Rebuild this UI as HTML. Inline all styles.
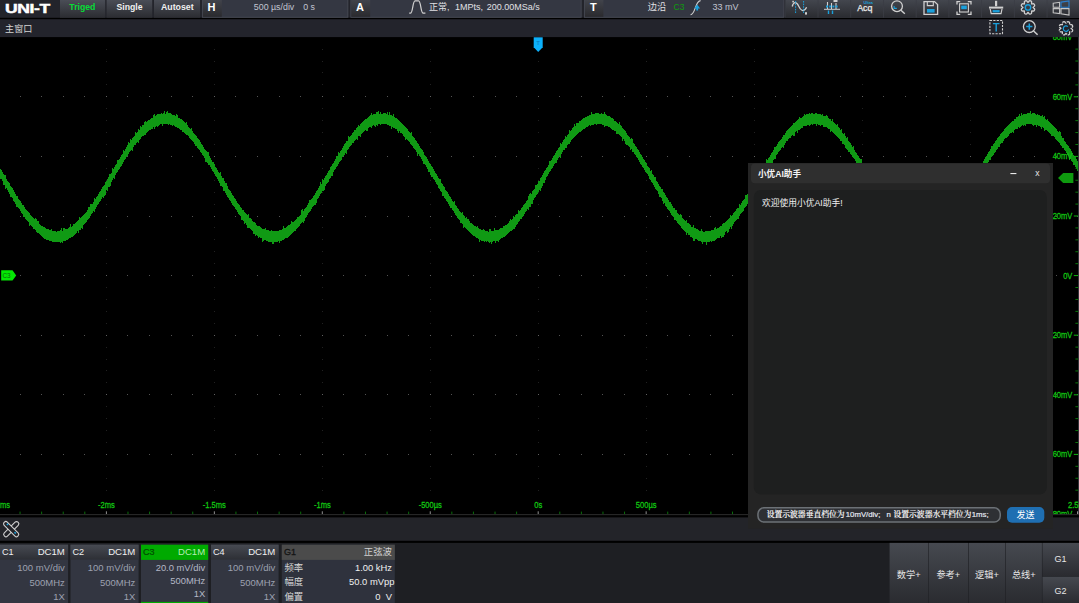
<!DOCTYPE html>
<html lang="zh-CN">
<head>
<meta charset="utf-8">
<title>UNI-T Oscilloscope</title>
<style>
html,body{margin:0;padding:0;background:#000;}
body{width:1079px;height:603px;position:relative;overflow:hidden;font-family:"Liberation Sans","Noto Sans CJK SC",sans-serif;}
#app{position:absolute;left:0;top:0;width:1079px;height:603px;overflow:hidden;background:#000;}
#app div{position:absolute;}
.t{margin:0;padding:0;}
.l{color:#d4dae4;}
svg{overflow:visible;}
</style>
</head>
<body>
<div id="app">
<svg class="scope" width="1079" height="603" viewBox="0 0 1079 603" style="position:absolute;left:0;top:0"><defs><clipPath id="cl"><rect x="0" y="37.1" width="1079" height="477.2"/></clipPath></defs><rect x="0" y="37.1" width="1079" height="477.2" fill="#000"/><g clip-path="url(#cl)"><g fill="#8a8a8a"><rect x="106" y="49" width="1" height="1" opacity="0.24"/><rect x="106" y="61" width="1" height="1" opacity="0.24"/><rect x="106" y="72" width="1" height="1" opacity="0.24"/><rect x="106" y="84" width="1" height="1" opacity="0.24"/><rect x="106" y="96" width="1" height="1" opacity="0.24"/><rect x="106" y="108" width="1" height="1" opacity="0.24"/><rect x="106" y="120" width="1" height="1" opacity="0.24"/><rect x="106" y="132" width="1" height="1" opacity="0.24"/><rect x="106" y="144" width="1" height="1" opacity="0.24"/><rect x="106" y="156" width="1" height="1" opacity="0.24"/><rect x="106" y="168" width="1" height="1" opacity="0.24"/><rect x="106" y="180" width="1" height="1" opacity="0.24"/><rect x="106" y="192" width="1" height="1" opacity="0.24"/><rect x="106" y="204" width="1" height="1" opacity="0.24"/><rect x="106" y="216" width="1" height="1" opacity="0.24"/><rect x="106" y="227" width="1" height="1" opacity="0.24"/><rect x="106" y="239" width="1" height="1" opacity="0.24"/><rect x="106" y="251" width="1" height="1" opacity="0.24"/><rect x="106" y="263" width="1" height="1" opacity="0.24"/><rect x="106" y="275" width="1" height="1" opacity="0.24"/><rect x="106" y="287" width="1" height="1" opacity="0.24"/><rect x="106" y="299" width="1" height="1" opacity="0.24"/><rect x="106" y="311" width="1" height="1" opacity="0.24"/><rect x="106" y="323" width="1" height="1" opacity="0.24"/><rect x="106" y="335" width="1" height="1" opacity="0.24"/><rect x="106" y="347" width="1" height="1" opacity="0.24"/><rect x="106" y="359" width="1" height="1" opacity="0.24"/><rect x="106" y="370" width="1" height="1" opacity="0.24"/><rect x="106" y="382" width="1" height="1" opacity="0.24"/><rect x="106" y="394" width="1" height="1" opacity="0.24"/><rect x="106" y="406" width="1" height="1" opacity="0.24"/><rect x="106" y="418" width="1" height="1" opacity="0.24"/><rect x="106" y="430" width="1" height="1" opacity="0.24"/><rect x="106" y="442" width="1" height="1" opacity="0.24"/><rect x="106" y="454" width="1" height="1" opacity="0.24"/><rect x="106" y="466" width="1" height="1" opacity="0.24"/><rect x="106" y="478" width="1" height="1" opacity="0.24"/><rect x="106" y="490" width="1" height="1" opacity="0.24"/><rect x="106" y="502" width="1" height="1" opacity="0.24"/><rect x="214" y="49" width="1" height="1" opacity="0.24"/><rect x="214" y="61" width="1" height="1" opacity="0.24"/><rect x="214" y="72" width="1" height="1" opacity="0.24"/><rect x="214" y="84" width="1" height="1" opacity="0.24"/><rect x="214" y="96" width="1" height="1" opacity="0.24"/><rect x="214" y="108" width="1" height="1" opacity="0.24"/><rect x="214" y="120" width="1" height="1" opacity="0.24"/><rect x="214" y="132" width="1" height="1" opacity="0.24"/><rect x="214" y="144" width="1" height="1" opacity="0.24"/><rect x="214" y="156" width="1" height="1" opacity="0.24"/><rect x="214" y="168" width="1" height="1" opacity="0.24"/><rect x="214" y="180" width="1" height="1" opacity="0.24"/><rect x="214" y="192" width="1" height="1" opacity="0.24"/><rect x="214" y="204" width="1" height="1" opacity="0.24"/><rect x="214" y="216" width="1" height="1" opacity="0.24"/><rect x="214" y="227" width="1" height="1" opacity="0.24"/><rect x="214" y="239" width="1" height="1" opacity="0.24"/><rect x="214" y="251" width="1" height="1" opacity="0.24"/><rect x="214" y="263" width="1" height="1" opacity="0.24"/><rect x="214" y="275" width="1" height="1" opacity="0.24"/><rect x="214" y="287" width="1" height="1" opacity="0.24"/><rect x="214" y="299" width="1" height="1" opacity="0.24"/><rect x="214" y="311" width="1" height="1" opacity="0.24"/><rect x="214" y="323" width="1" height="1" opacity="0.24"/><rect x="214" y="335" width="1" height="1" opacity="0.24"/><rect x="214" y="347" width="1" height="1" opacity="0.24"/><rect x="214" y="359" width="1" height="1" opacity="0.24"/><rect x="214" y="370" width="1" height="1" opacity="0.24"/><rect x="214" y="382" width="1" height="1" opacity="0.24"/><rect x="214" y="394" width="1" height="1" opacity="0.24"/><rect x="214" y="406" width="1" height="1" opacity="0.24"/><rect x="214" y="418" width="1" height="1" opacity="0.24"/><rect x="214" y="430" width="1" height="1" opacity="0.24"/><rect x="214" y="442" width="1" height="1" opacity="0.24"/><rect x="214" y="454" width="1" height="1" opacity="0.24"/><rect x="214" y="466" width="1" height="1" opacity="0.24"/><rect x="214" y="478" width="1" height="1" opacity="0.24"/><rect x="214" y="490" width="1" height="1" opacity="0.24"/><rect x="214" y="502" width="1" height="1" opacity="0.24"/><rect x="322" y="49" width="1" height="1" opacity="0.24"/><rect x="322" y="61" width="1" height="1" opacity="0.24"/><rect x="322" y="72" width="1" height="1" opacity="0.24"/><rect x="322" y="84" width="1" height="1" opacity="0.24"/><rect x="322" y="96" width="1" height="1" opacity="0.24"/><rect x="322" y="108" width="1" height="1" opacity="0.24"/><rect x="322" y="120" width="1" height="1" opacity="0.24"/><rect x="322" y="132" width="1" height="1" opacity="0.24"/><rect x="322" y="144" width="1" height="1" opacity="0.24"/><rect x="322" y="156" width="1" height="1" opacity="0.24"/><rect x="322" y="168" width="1" height="1" opacity="0.24"/><rect x="322" y="180" width="1" height="1" opacity="0.24"/><rect x="322" y="192" width="1" height="1" opacity="0.24"/><rect x="322" y="204" width="1" height="1" opacity="0.24"/><rect x="322" y="216" width="1" height="1" opacity="0.24"/><rect x="322" y="227" width="1" height="1" opacity="0.24"/><rect x="322" y="239" width="1" height="1" opacity="0.24"/><rect x="322" y="251" width="1" height="1" opacity="0.24"/><rect x="322" y="263" width="1" height="1" opacity="0.24"/><rect x="322" y="275" width="1" height="1" opacity="0.24"/><rect x="322" y="287" width="1" height="1" opacity="0.24"/><rect x="322" y="299" width="1" height="1" opacity="0.24"/><rect x="322" y="311" width="1" height="1" opacity="0.24"/><rect x="322" y="323" width="1" height="1" opacity="0.24"/><rect x="322" y="335" width="1" height="1" opacity="0.24"/><rect x="322" y="347" width="1" height="1" opacity="0.24"/><rect x="322" y="359" width="1" height="1" opacity="0.24"/><rect x="322" y="370" width="1" height="1" opacity="0.24"/><rect x="322" y="382" width="1" height="1" opacity="0.24"/><rect x="322" y="394" width="1" height="1" opacity="0.24"/><rect x="322" y="406" width="1" height="1" opacity="0.24"/><rect x="322" y="418" width="1" height="1" opacity="0.24"/><rect x="322" y="430" width="1" height="1" opacity="0.24"/><rect x="322" y="442" width="1" height="1" opacity="0.24"/><rect x="322" y="454" width="1" height="1" opacity="0.24"/><rect x="322" y="466" width="1" height="1" opacity="0.24"/><rect x="322" y="478" width="1" height="1" opacity="0.24"/><rect x="322" y="490" width="1" height="1" opacity="0.24"/><rect x="322" y="502" width="1" height="1" opacity="0.24"/><rect x="430" y="49" width="1" height="1" opacity="0.24"/><rect x="430" y="61" width="1" height="1" opacity="0.24"/><rect x="430" y="72" width="1" height="1" opacity="0.24"/><rect x="430" y="84" width="1" height="1" opacity="0.24"/><rect x="430" y="96" width="1" height="1" opacity="0.24"/><rect x="430" y="108" width="1" height="1" opacity="0.24"/><rect x="430" y="120" width="1" height="1" opacity="0.24"/><rect x="430" y="132" width="1" height="1" opacity="0.24"/><rect x="430" y="144" width="1" height="1" opacity="0.24"/><rect x="430" y="156" width="1" height="1" opacity="0.24"/><rect x="430" y="168" width="1" height="1" opacity="0.24"/><rect x="430" y="180" width="1" height="1" opacity="0.24"/><rect x="430" y="192" width="1" height="1" opacity="0.24"/><rect x="430" y="204" width="1" height="1" opacity="0.24"/><rect x="430" y="216" width="1" height="1" opacity="0.24"/><rect x="430" y="227" width="1" height="1" opacity="0.24"/><rect x="430" y="239" width="1" height="1" opacity="0.24"/><rect x="430" y="251" width="1" height="1" opacity="0.24"/><rect x="430" y="263" width="1" height="1" opacity="0.24"/><rect x="430" y="275" width="1" height="1" opacity="0.24"/><rect x="430" y="287" width="1" height="1" opacity="0.24"/><rect x="430" y="299" width="1" height="1" opacity="0.24"/><rect x="430" y="311" width="1" height="1" opacity="0.24"/><rect x="430" y="323" width="1" height="1" opacity="0.24"/><rect x="430" y="335" width="1" height="1" opacity="0.24"/><rect x="430" y="347" width="1" height="1" opacity="0.24"/><rect x="430" y="359" width="1" height="1" opacity="0.24"/><rect x="430" y="370" width="1" height="1" opacity="0.24"/><rect x="430" y="382" width="1" height="1" opacity="0.24"/><rect x="430" y="394" width="1" height="1" opacity="0.24"/><rect x="430" y="406" width="1" height="1" opacity="0.24"/><rect x="430" y="418" width="1" height="1" opacity="0.24"/><rect x="430" y="430" width="1" height="1" opacity="0.24"/><rect x="430" y="442" width="1" height="1" opacity="0.24"/><rect x="430" y="454" width="1" height="1" opacity="0.24"/><rect x="430" y="466" width="1" height="1" opacity="0.24"/><rect x="430" y="478" width="1" height="1" opacity="0.24"/><rect x="430" y="490" width="1" height="1" opacity="0.24"/><rect x="430" y="502" width="1" height="1" opacity="0.24"/><rect x="538" y="49" width="1" height="1" opacity="0.24"/><rect x="538" y="61" width="1" height="1" opacity="0.24"/><rect x="538" y="72" width="1" height="1" opacity="0.24"/><rect x="538" y="84" width="1" height="1" opacity="0.24"/><rect x="538" y="96" width="1" height="1" opacity="0.24"/><rect x="538" y="108" width="1" height="1" opacity="0.24"/><rect x="538" y="120" width="1" height="1" opacity="0.24"/><rect x="538" y="132" width="1" height="1" opacity="0.24"/><rect x="538" y="144" width="1" height="1" opacity="0.24"/><rect x="538" y="156" width="1" height="1" opacity="0.24"/><rect x="538" y="168" width="1" height="1" opacity="0.24"/><rect x="538" y="180" width="1" height="1" opacity="0.24"/><rect x="538" y="192" width="1" height="1" opacity="0.24"/><rect x="538" y="204" width="1" height="1" opacity="0.24"/><rect x="538" y="216" width="1" height="1" opacity="0.24"/><rect x="538" y="227" width="1" height="1" opacity="0.24"/><rect x="538" y="239" width="1" height="1" opacity="0.24"/><rect x="538" y="251" width="1" height="1" opacity="0.24"/><rect x="538" y="263" width="1" height="1" opacity="0.24"/><rect x="538" y="275" width="1" height="1" opacity="0.24"/><rect x="538" y="287" width="1" height="1" opacity="0.24"/><rect x="538" y="299" width="1" height="1" opacity="0.24"/><rect x="538" y="311" width="1" height="1" opacity="0.24"/><rect x="538" y="323" width="1" height="1" opacity="0.24"/><rect x="538" y="335" width="1" height="1" opacity="0.24"/><rect x="538" y="347" width="1" height="1" opacity="0.24"/><rect x="538" y="359" width="1" height="1" opacity="0.24"/><rect x="538" y="370" width="1" height="1" opacity="0.24"/><rect x="538" y="382" width="1" height="1" opacity="0.24"/><rect x="538" y="394" width="1" height="1" opacity="0.24"/><rect x="538" y="406" width="1" height="1" opacity="0.24"/><rect x="538" y="418" width="1" height="1" opacity="0.24"/><rect x="538" y="430" width="1" height="1" opacity="0.24"/><rect x="538" y="442" width="1" height="1" opacity="0.24"/><rect x="538" y="454" width="1" height="1" opacity="0.24"/><rect x="538" y="466" width="1" height="1" opacity="0.24"/><rect x="538" y="478" width="1" height="1" opacity="0.24"/><rect x="538" y="490" width="1" height="1" opacity="0.24"/><rect x="538" y="502" width="1" height="1" opacity="0.24"/><rect x="646" y="49" width="1" height="1" opacity="0.24"/><rect x="646" y="61" width="1" height="1" opacity="0.24"/><rect x="646" y="72" width="1" height="1" opacity="0.24"/><rect x="646" y="84" width="1" height="1" opacity="0.24"/><rect x="646" y="96" width="1" height="1" opacity="0.24"/><rect x="646" y="108" width="1" height="1" opacity="0.24"/><rect x="646" y="120" width="1" height="1" opacity="0.24"/><rect x="646" y="132" width="1" height="1" opacity="0.24"/><rect x="646" y="144" width="1" height="1" opacity="0.24"/><rect x="646" y="156" width="1" height="1" opacity="0.24"/><rect x="646" y="168" width="1" height="1" opacity="0.24"/><rect x="646" y="180" width="1" height="1" opacity="0.24"/><rect x="646" y="192" width="1" height="1" opacity="0.24"/><rect x="646" y="204" width="1" height="1" opacity="0.24"/><rect x="646" y="216" width="1" height="1" opacity="0.24"/><rect x="646" y="227" width="1" height="1" opacity="0.24"/><rect x="646" y="239" width="1" height="1" opacity="0.24"/><rect x="646" y="251" width="1" height="1" opacity="0.24"/><rect x="646" y="263" width="1" height="1" opacity="0.24"/><rect x="646" y="275" width="1" height="1" opacity="0.24"/><rect x="646" y="287" width="1" height="1" opacity="0.24"/><rect x="646" y="299" width="1" height="1" opacity="0.24"/><rect x="646" y="311" width="1" height="1" opacity="0.24"/><rect x="646" y="323" width="1" height="1" opacity="0.24"/><rect x="646" y="335" width="1" height="1" opacity="0.24"/><rect x="646" y="347" width="1" height="1" opacity="0.24"/><rect x="646" y="359" width="1" height="1" opacity="0.24"/><rect x="646" y="370" width="1" height="1" opacity="0.24"/><rect x="646" y="382" width="1" height="1" opacity="0.24"/><rect x="646" y="394" width="1" height="1" opacity="0.24"/><rect x="646" y="406" width="1" height="1" opacity="0.24"/><rect x="646" y="418" width="1" height="1" opacity="0.24"/><rect x="646" y="430" width="1" height="1" opacity="0.24"/><rect x="646" y="442" width="1" height="1" opacity="0.24"/><rect x="646" y="454" width="1" height="1" opacity="0.24"/><rect x="646" y="466" width="1" height="1" opacity="0.24"/><rect x="646" y="478" width="1" height="1" opacity="0.24"/><rect x="646" y="490" width="1" height="1" opacity="0.24"/><rect x="646" y="502" width="1" height="1" opacity="0.24"/><rect x="754" y="49" width="1" height="1" opacity="0.24"/><rect x="754" y="61" width="1" height="1" opacity="0.24"/><rect x="754" y="72" width="1" height="1" opacity="0.24"/><rect x="754" y="84" width="1" height="1" opacity="0.24"/><rect x="754" y="96" width="1" height="1" opacity="0.24"/><rect x="754" y="108" width="1" height="1" opacity="0.24"/><rect x="754" y="120" width="1" height="1" opacity="0.24"/><rect x="754" y="132" width="1" height="1" opacity="0.24"/><rect x="754" y="144" width="1" height="1" opacity="0.24"/><rect x="754" y="156" width="1" height="1" opacity="0.24"/><rect x="754" y="168" width="1" height="1" opacity="0.24"/><rect x="754" y="180" width="1" height="1" opacity="0.24"/><rect x="754" y="192" width="1" height="1" opacity="0.24"/><rect x="754" y="204" width="1" height="1" opacity="0.24"/><rect x="754" y="216" width="1" height="1" opacity="0.24"/><rect x="754" y="227" width="1" height="1" opacity="0.24"/><rect x="754" y="239" width="1" height="1" opacity="0.24"/><rect x="754" y="251" width="1" height="1" opacity="0.24"/><rect x="754" y="263" width="1" height="1" opacity="0.24"/><rect x="754" y="275" width="1" height="1" opacity="0.24"/><rect x="754" y="287" width="1" height="1" opacity="0.24"/><rect x="754" y="299" width="1" height="1" opacity="0.24"/><rect x="754" y="311" width="1" height="1" opacity="0.24"/><rect x="754" y="323" width="1" height="1" opacity="0.24"/><rect x="754" y="335" width="1" height="1" opacity="0.24"/><rect x="754" y="347" width="1" height="1" opacity="0.24"/><rect x="754" y="359" width="1" height="1" opacity="0.24"/><rect x="754" y="370" width="1" height="1" opacity="0.24"/><rect x="754" y="382" width="1" height="1" opacity="0.24"/><rect x="754" y="394" width="1" height="1" opacity="0.24"/><rect x="754" y="406" width="1" height="1" opacity="0.24"/><rect x="754" y="418" width="1" height="1" opacity="0.24"/><rect x="754" y="430" width="1" height="1" opacity="0.24"/><rect x="754" y="442" width="1" height="1" opacity="0.24"/><rect x="754" y="454" width="1" height="1" opacity="0.24"/><rect x="754" y="466" width="1" height="1" opacity="0.24"/><rect x="754" y="478" width="1" height="1" opacity="0.24"/><rect x="754" y="490" width="1" height="1" opacity="0.24"/><rect x="754" y="502" width="1" height="1" opacity="0.24"/><rect x="862" y="49" width="1" height="1" opacity="0.24"/><rect x="862" y="61" width="1" height="1" opacity="0.24"/><rect x="862" y="72" width="1" height="1" opacity="0.24"/><rect x="862" y="84" width="1" height="1" opacity="0.24"/><rect x="862" y="96" width="1" height="1" opacity="0.24"/><rect x="862" y="108" width="1" height="1" opacity="0.24"/><rect x="862" y="120" width="1" height="1" opacity="0.24"/><rect x="862" y="132" width="1" height="1" opacity="0.24"/><rect x="862" y="144" width="1" height="1" opacity="0.24"/><rect x="862" y="156" width="1" height="1" opacity="0.24"/><rect x="862" y="168" width="1" height="1" opacity="0.24"/><rect x="862" y="180" width="1" height="1" opacity="0.24"/><rect x="862" y="192" width="1" height="1" opacity="0.24"/><rect x="862" y="204" width="1" height="1" opacity="0.24"/><rect x="862" y="216" width="1" height="1" opacity="0.24"/><rect x="862" y="227" width="1" height="1" opacity="0.24"/><rect x="862" y="239" width="1" height="1" opacity="0.24"/><rect x="862" y="251" width="1" height="1" opacity="0.24"/><rect x="862" y="263" width="1" height="1" opacity="0.24"/><rect x="862" y="275" width="1" height="1" opacity="0.24"/><rect x="862" y="287" width="1" height="1" opacity="0.24"/><rect x="862" y="299" width="1" height="1" opacity="0.24"/><rect x="862" y="311" width="1" height="1" opacity="0.24"/><rect x="862" y="323" width="1" height="1" opacity="0.24"/><rect x="862" y="335" width="1" height="1" opacity="0.24"/><rect x="862" y="347" width="1" height="1" opacity="0.24"/><rect x="862" y="359" width="1" height="1" opacity="0.24"/><rect x="862" y="370" width="1" height="1" opacity="0.24"/><rect x="862" y="382" width="1" height="1" opacity="0.24"/><rect x="862" y="394" width="1" height="1" opacity="0.24"/><rect x="862" y="406" width="1" height="1" opacity="0.24"/><rect x="862" y="418" width="1" height="1" opacity="0.24"/><rect x="862" y="430" width="1" height="1" opacity="0.24"/><rect x="862" y="442" width="1" height="1" opacity="0.24"/><rect x="862" y="454" width="1" height="1" opacity="0.24"/><rect x="862" y="466" width="1" height="1" opacity="0.24"/><rect x="862" y="478" width="1" height="1" opacity="0.24"/><rect x="862" y="490" width="1" height="1" opacity="0.24"/><rect x="862" y="502" width="1" height="1" opacity="0.24"/><rect x="970" y="49" width="1" height="1" opacity="0.24"/><rect x="970" y="61" width="1" height="1" opacity="0.24"/><rect x="970" y="72" width="1" height="1" opacity="0.24"/><rect x="970" y="84" width="1" height="1" opacity="0.24"/><rect x="970" y="96" width="1" height="1" opacity="0.24"/><rect x="970" y="108" width="1" height="1" opacity="0.24"/><rect x="970" y="120" width="1" height="1" opacity="0.24"/><rect x="970" y="132" width="1" height="1" opacity="0.24"/><rect x="970" y="144" width="1" height="1" opacity="0.24"/><rect x="970" y="156" width="1" height="1" opacity="0.24"/><rect x="970" y="168" width="1" height="1" opacity="0.24"/><rect x="970" y="180" width="1" height="1" opacity="0.24"/><rect x="970" y="192" width="1" height="1" opacity="0.24"/><rect x="970" y="204" width="1" height="1" opacity="0.24"/><rect x="970" y="216" width="1" height="1" opacity="0.24"/><rect x="970" y="227" width="1" height="1" opacity="0.24"/><rect x="970" y="239" width="1" height="1" opacity="0.24"/><rect x="970" y="251" width="1" height="1" opacity="0.24"/><rect x="970" y="263" width="1" height="1" opacity="0.24"/><rect x="970" y="275" width="1" height="1" opacity="0.24"/><rect x="970" y="287" width="1" height="1" opacity="0.24"/><rect x="970" y="299" width="1" height="1" opacity="0.24"/><rect x="970" y="311" width="1" height="1" opacity="0.24"/><rect x="970" y="323" width="1" height="1" opacity="0.24"/><rect x="970" y="335" width="1" height="1" opacity="0.24"/><rect x="970" y="347" width="1" height="1" opacity="0.24"/><rect x="970" y="359" width="1" height="1" opacity="0.24"/><rect x="970" y="370" width="1" height="1" opacity="0.24"/><rect x="970" y="382" width="1" height="1" opacity="0.24"/><rect x="970" y="394" width="1" height="1" opacity="0.24"/><rect x="970" y="406" width="1" height="1" opacity="0.24"/><rect x="970" y="418" width="1" height="1" opacity="0.24"/><rect x="970" y="430" width="1" height="1" opacity="0.24"/><rect x="970" y="442" width="1" height="1" opacity="0.24"/><rect x="970" y="454" width="1" height="1" opacity="0.24"/><rect x="970" y="466" width="1" height="1" opacity="0.24"/><rect x="970" y="478" width="1" height="1" opacity="0.24"/><rect x="970" y="490" width="1" height="1" opacity="0.24"/><rect x="970" y="502" width="1" height="1" opacity="0.24"/><rect x="20" y="96" width="1" height="1" opacity="0.6"/><rect x="41" y="96" width="1" height="1" opacity="0.6"/><rect x="63" y="96" width="1" height="1" opacity="0.6"/><rect x="84" y="96" width="1" height="1" opacity="0.6"/><rect x="106" y="96" width="1" height="1" opacity="0.6"/><rect x="127" y="96" width="1" height="1" opacity="0.6"/><rect x="149" y="96" width="1" height="1" opacity="0.6"/><rect x="171" y="96" width="1" height="1" opacity="0.6"/><rect x="192" y="96" width="1" height="1" opacity="0.6"/><rect x="214" y="96" width="1" height="1" opacity="0.6"/><rect x="235" y="96" width="1" height="1" opacity="0.6"/><rect x="257" y="96" width="1" height="1" opacity="0.6"/><rect x="279" y="96" width="1" height="1" opacity="0.6"/><rect x="300" y="96" width="1" height="1" opacity="0.6"/><rect x="322" y="96" width="1" height="1" opacity="0.6"/><rect x="343" y="96" width="1" height="1" opacity="0.6"/><rect x="365" y="96" width="1" height="1" opacity="0.6"/><rect x="387" y="96" width="1" height="1" opacity="0.6"/><rect x="408" y="96" width="1" height="1" opacity="0.6"/><rect x="430" y="96" width="1" height="1" opacity="0.6"/><rect x="451" y="96" width="1" height="1" opacity="0.6"/><rect x="473" y="96" width="1" height="1" opacity="0.6"/><rect x="495" y="96" width="1" height="1" opacity="0.6"/><rect x="516" y="96" width="1" height="1" opacity="0.6"/><rect x="538" y="96" width="1" height="1" opacity="0.6"/><rect x="559" y="96" width="1" height="1" opacity="0.6"/><rect x="581" y="96" width="1" height="1" opacity="0.6"/><rect x="602" y="96" width="1" height="1" opacity="0.6"/><rect x="624" y="96" width="1" height="1" opacity="0.6"/><rect x="646" y="96" width="1" height="1" opacity="0.6"/><rect x="667" y="96" width="1" height="1" opacity="0.6"/><rect x="689" y="96" width="1" height="1" opacity="0.6"/><rect x="710" y="96" width="1" height="1" opacity="0.6"/><rect x="732" y="96" width="1" height="1" opacity="0.6"/><rect x="754" y="96" width="1" height="1" opacity="0.6"/><rect x="775" y="96" width="1" height="1" opacity="0.6"/><rect x="797" y="96" width="1" height="1" opacity="0.6"/><rect x="818" y="96" width="1" height="1" opacity="0.6"/><rect x="840" y="96" width="1" height="1" opacity="0.6"/><rect x="862" y="96" width="1" height="1" opacity="0.6"/><rect x="883" y="96" width="1" height="1" opacity="0.6"/><rect x="905" y="96" width="1" height="1" opacity="0.6"/><rect x="926" y="96" width="1" height="1" opacity="0.6"/><rect x="948" y="96" width="1" height="1" opacity="0.6"/><rect x="970" y="96" width="1" height="1" opacity="0.6"/><rect x="991" y="96" width="1" height="1" opacity="0.6"/><rect x="1013" y="96" width="1" height="1" opacity="0.6"/><rect x="1034" y="96" width="1" height="1" opacity="0.6"/><rect x="1056" y="96" width="1" height="1" opacity="0.6"/><rect x="1077" y="96" width="1" height="1" opacity="0.6"/><rect x="20" y="156" width="1" height="1" opacity="0.6"/><rect x="41" y="156" width="1" height="1" opacity="0.6"/><rect x="63" y="156" width="1" height="1" opacity="0.6"/><rect x="84" y="156" width="1" height="1" opacity="0.6"/><rect x="106" y="156" width="1" height="1" opacity="0.6"/><rect x="127" y="156" width="1" height="1" opacity="0.6"/><rect x="149" y="156" width="1" height="1" opacity="0.6"/><rect x="171" y="156" width="1" height="1" opacity="0.6"/><rect x="192" y="156" width="1" height="1" opacity="0.6"/><rect x="214" y="156" width="1" height="1" opacity="0.6"/><rect x="235" y="156" width="1" height="1" opacity="0.6"/><rect x="257" y="156" width="1" height="1" opacity="0.6"/><rect x="279" y="156" width="1" height="1" opacity="0.6"/><rect x="300" y="156" width="1" height="1" opacity="0.6"/><rect x="322" y="156" width="1" height="1" opacity="0.6"/><rect x="343" y="156" width="1" height="1" opacity="0.6"/><rect x="365" y="156" width="1" height="1" opacity="0.6"/><rect x="387" y="156" width="1" height="1" opacity="0.6"/><rect x="408" y="156" width="1" height="1" opacity="0.6"/><rect x="430" y="156" width="1" height="1" opacity="0.6"/><rect x="451" y="156" width="1" height="1" opacity="0.6"/><rect x="473" y="156" width="1" height="1" opacity="0.6"/><rect x="495" y="156" width="1" height="1" opacity="0.6"/><rect x="516" y="156" width="1" height="1" opacity="0.6"/><rect x="538" y="156" width="1" height="1" opacity="0.6"/><rect x="559" y="156" width="1" height="1" opacity="0.6"/><rect x="581" y="156" width="1" height="1" opacity="0.6"/><rect x="602" y="156" width="1" height="1" opacity="0.6"/><rect x="624" y="156" width="1" height="1" opacity="0.6"/><rect x="646" y="156" width="1" height="1" opacity="0.6"/><rect x="667" y="156" width="1" height="1" opacity="0.6"/><rect x="689" y="156" width="1" height="1" opacity="0.6"/><rect x="710" y="156" width="1" height="1" opacity="0.6"/><rect x="732" y="156" width="1" height="1" opacity="0.6"/><rect x="754" y="156" width="1" height="1" opacity="0.6"/><rect x="775" y="156" width="1" height="1" opacity="0.6"/><rect x="797" y="156" width="1" height="1" opacity="0.6"/><rect x="818" y="156" width="1" height="1" opacity="0.6"/><rect x="840" y="156" width="1" height="1" opacity="0.6"/><rect x="862" y="156" width="1" height="1" opacity="0.6"/><rect x="883" y="156" width="1" height="1" opacity="0.6"/><rect x="905" y="156" width="1" height="1" opacity="0.6"/><rect x="926" y="156" width="1" height="1" opacity="0.6"/><rect x="948" y="156" width="1" height="1" opacity="0.6"/><rect x="970" y="156" width="1" height="1" opacity="0.6"/><rect x="991" y="156" width="1" height="1" opacity="0.6"/><rect x="1013" y="156" width="1" height="1" opacity="0.6"/><rect x="1034" y="156" width="1" height="1" opacity="0.6"/><rect x="1056" y="156" width="1" height="1" opacity="0.6"/><rect x="1077" y="156" width="1" height="1" opacity="0.6"/><rect x="20" y="216" width="1" height="1" opacity="0.6"/><rect x="41" y="216" width="1" height="1" opacity="0.6"/><rect x="63" y="216" width="1" height="1" opacity="0.6"/><rect x="84" y="216" width="1" height="1" opacity="0.6"/><rect x="106" y="216" width="1" height="1" opacity="0.6"/><rect x="127" y="216" width="1" height="1" opacity="0.6"/><rect x="149" y="216" width="1" height="1" opacity="0.6"/><rect x="171" y="216" width="1" height="1" opacity="0.6"/><rect x="192" y="216" width="1" height="1" opacity="0.6"/><rect x="214" y="216" width="1" height="1" opacity="0.6"/><rect x="235" y="216" width="1" height="1" opacity="0.6"/><rect x="257" y="216" width="1" height="1" opacity="0.6"/><rect x="279" y="216" width="1" height="1" opacity="0.6"/><rect x="300" y="216" width="1" height="1" opacity="0.6"/><rect x="322" y="216" width="1" height="1" opacity="0.6"/><rect x="343" y="216" width="1" height="1" opacity="0.6"/><rect x="365" y="216" width="1" height="1" opacity="0.6"/><rect x="387" y="216" width="1" height="1" opacity="0.6"/><rect x="408" y="216" width="1" height="1" opacity="0.6"/><rect x="430" y="216" width="1" height="1" opacity="0.6"/><rect x="451" y="216" width="1" height="1" opacity="0.6"/><rect x="473" y="216" width="1" height="1" opacity="0.6"/><rect x="495" y="216" width="1" height="1" opacity="0.6"/><rect x="516" y="216" width="1" height="1" opacity="0.6"/><rect x="538" y="216" width="1" height="1" opacity="0.6"/><rect x="559" y="216" width="1" height="1" opacity="0.6"/><rect x="581" y="216" width="1" height="1" opacity="0.6"/><rect x="602" y="216" width="1" height="1" opacity="0.6"/><rect x="624" y="216" width="1" height="1" opacity="0.6"/><rect x="646" y="216" width="1" height="1" opacity="0.6"/><rect x="667" y="216" width="1" height="1" opacity="0.6"/><rect x="689" y="216" width="1" height="1" opacity="0.6"/><rect x="710" y="216" width="1" height="1" opacity="0.6"/><rect x="732" y="216" width="1" height="1" opacity="0.6"/><rect x="754" y="216" width="1" height="1" opacity="0.6"/><rect x="775" y="216" width="1" height="1" opacity="0.6"/><rect x="797" y="216" width="1" height="1" opacity="0.6"/><rect x="818" y="216" width="1" height="1" opacity="0.6"/><rect x="840" y="216" width="1" height="1" opacity="0.6"/><rect x="862" y="216" width="1" height="1" opacity="0.6"/><rect x="883" y="216" width="1" height="1" opacity="0.6"/><rect x="905" y="216" width="1" height="1" opacity="0.6"/><rect x="926" y="216" width="1" height="1" opacity="0.6"/><rect x="948" y="216" width="1" height="1" opacity="0.6"/><rect x="970" y="216" width="1" height="1" opacity="0.6"/><rect x="991" y="216" width="1" height="1" opacity="0.6"/><rect x="1013" y="216" width="1" height="1" opacity="0.6"/><rect x="1034" y="216" width="1" height="1" opacity="0.6"/><rect x="1056" y="216" width="1" height="1" opacity="0.6"/><rect x="1077" y="216" width="1" height="1" opacity="0.6"/><rect x="20" y="275" width="1" height="1" opacity="0.6"/><rect x="41" y="275" width="1" height="1" opacity="0.6"/><rect x="63" y="275" width="1" height="1" opacity="0.6"/><rect x="84" y="275" width="1" height="1" opacity="0.6"/><rect x="106" y="275" width="1" height="1" opacity="0.6"/><rect x="127" y="275" width="1" height="1" opacity="0.6"/><rect x="149" y="275" width="1" height="1" opacity="0.6"/><rect x="171" y="275" width="1" height="1" opacity="0.6"/><rect x="192" y="275" width="1" height="1" opacity="0.6"/><rect x="214" y="275" width="1" height="1" opacity="0.6"/><rect x="235" y="275" width="1" height="1" opacity="0.6"/><rect x="257" y="275" width="1" height="1" opacity="0.6"/><rect x="279" y="275" width="1" height="1" opacity="0.6"/><rect x="300" y="275" width="1" height="1" opacity="0.6"/><rect x="322" y="275" width="1" height="1" opacity="0.6"/><rect x="343" y="275" width="1" height="1" opacity="0.6"/><rect x="365" y="275" width="1" height="1" opacity="0.6"/><rect x="387" y="275" width="1" height="1" opacity="0.6"/><rect x="408" y="275" width="1" height="1" opacity="0.6"/><rect x="430" y="275" width="1" height="1" opacity="0.6"/><rect x="451" y="275" width="1" height="1" opacity="0.6"/><rect x="473" y="275" width="1" height="1" opacity="0.6"/><rect x="495" y="275" width="1" height="1" opacity="0.6"/><rect x="516" y="275" width="1" height="1" opacity="0.6"/><rect x="538" y="275" width="1" height="1" opacity="0.6"/><rect x="559" y="275" width="1" height="1" opacity="0.6"/><rect x="581" y="275" width="1" height="1" opacity="0.6"/><rect x="602" y="275" width="1" height="1" opacity="0.6"/><rect x="624" y="275" width="1" height="1" opacity="0.6"/><rect x="646" y="275" width="1" height="1" opacity="0.6"/><rect x="667" y="275" width="1" height="1" opacity="0.6"/><rect x="689" y="275" width="1" height="1" opacity="0.6"/><rect x="710" y="275" width="1" height="1" opacity="0.6"/><rect x="732" y="275" width="1" height="1" opacity="0.6"/><rect x="754" y="275" width="1" height="1" opacity="0.6"/><rect x="775" y="275" width="1" height="1" opacity="0.6"/><rect x="797" y="275" width="1" height="1" opacity="0.6"/><rect x="818" y="275" width="1" height="1" opacity="0.6"/><rect x="840" y="275" width="1" height="1" opacity="0.6"/><rect x="862" y="275" width="1" height="1" opacity="0.6"/><rect x="883" y="275" width="1" height="1" opacity="0.6"/><rect x="905" y="275" width="1" height="1" opacity="0.6"/><rect x="926" y="275" width="1" height="1" opacity="0.6"/><rect x="948" y="275" width="1" height="1" opacity="0.6"/><rect x="970" y="275" width="1" height="1" opacity="0.6"/><rect x="991" y="275" width="1" height="1" opacity="0.6"/><rect x="1013" y="275" width="1" height="1" opacity="0.6"/><rect x="1034" y="275" width="1" height="1" opacity="0.6"/><rect x="1056" y="275" width="1" height="1" opacity="0.6"/><rect x="1077" y="275" width="1" height="1" opacity="0.6"/><rect x="20" y="335" width="1" height="1" opacity="0.6"/><rect x="41" y="335" width="1" height="1" opacity="0.6"/><rect x="63" y="335" width="1" height="1" opacity="0.6"/><rect x="84" y="335" width="1" height="1" opacity="0.6"/><rect x="106" y="335" width="1" height="1" opacity="0.6"/><rect x="127" y="335" width="1" height="1" opacity="0.6"/><rect x="149" y="335" width="1" height="1" opacity="0.6"/><rect x="171" y="335" width="1" height="1" opacity="0.6"/><rect x="192" y="335" width="1" height="1" opacity="0.6"/><rect x="214" y="335" width="1" height="1" opacity="0.6"/><rect x="235" y="335" width="1" height="1" opacity="0.6"/><rect x="257" y="335" width="1" height="1" opacity="0.6"/><rect x="279" y="335" width="1" height="1" opacity="0.6"/><rect x="300" y="335" width="1" height="1" opacity="0.6"/><rect x="322" y="335" width="1" height="1" opacity="0.6"/><rect x="343" y="335" width="1" height="1" opacity="0.6"/><rect x="365" y="335" width="1" height="1" opacity="0.6"/><rect x="387" y="335" width="1" height="1" opacity="0.6"/><rect x="408" y="335" width="1" height="1" opacity="0.6"/><rect x="430" y="335" width="1" height="1" opacity="0.6"/><rect x="451" y="335" width="1" height="1" opacity="0.6"/><rect x="473" y="335" width="1" height="1" opacity="0.6"/><rect x="495" y="335" width="1" height="1" opacity="0.6"/><rect x="516" y="335" width="1" height="1" opacity="0.6"/><rect x="538" y="335" width="1" height="1" opacity="0.6"/><rect x="559" y="335" width="1" height="1" opacity="0.6"/><rect x="581" y="335" width="1" height="1" opacity="0.6"/><rect x="602" y="335" width="1" height="1" opacity="0.6"/><rect x="624" y="335" width="1" height="1" opacity="0.6"/><rect x="646" y="335" width="1" height="1" opacity="0.6"/><rect x="667" y="335" width="1" height="1" opacity="0.6"/><rect x="689" y="335" width="1" height="1" opacity="0.6"/><rect x="710" y="335" width="1" height="1" opacity="0.6"/><rect x="732" y="335" width="1" height="1" opacity="0.6"/><rect x="754" y="335" width="1" height="1" opacity="0.6"/><rect x="775" y="335" width="1" height="1" opacity="0.6"/><rect x="797" y="335" width="1" height="1" opacity="0.6"/><rect x="818" y="335" width="1" height="1" opacity="0.6"/><rect x="840" y="335" width="1" height="1" opacity="0.6"/><rect x="862" y="335" width="1" height="1" opacity="0.6"/><rect x="883" y="335" width="1" height="1" opacity="0.6"/><rect x="905" y="335" width="1" height="1" opacity="0.6"/><rect x="926" y="335" width="1" height="1" opacity="0.6"/><rect x="948" y="335" width="1" height="1" opacity="0.6"/><rect x="970" y="335" width="1" height="1" opacity="0.6"/><rect x="991" y="335" width="1" height="1" opacity="0.6"/><rect x="1013" y="335" width="1" height="1" opacity="0.6"/><rect x="1034" y="335" width="1" height="1" opacity="0.6"/><rect x="1056" y="335" width="1" height="1" opacity="0.6"/><rect x="1077" y="335" width="1" height="1" opacity="0.6"/><rect x="20" y="394" width="1" height="1" opacity="0.6"/><rect x="41" y="394" width="1" height="1" opacity="0.6"/><rect x="63" y="394" width="1" height="1" opacity="0.6"/><rect x="84" y="394" width="1" height="1" opacity="0.6"/><rect x="106" y="394" width="1" height="1" opacity="0.6"/><rect x="127" y="394" width="1" height="1" opacity="0.6"/><rect x="149" y="394" width="1" height="1" opacity="0.6"/><rect x="171" y="394" width="1" height="1" opacity="0.6"/><rect x="192" y="394" width="1" height="1" opacity="0.6"/><rect x="214" y="394" width="1" height="1" opacity="0.6"/><rect x="235" y="394" width="1" height="1" opacity="0.6"/><rect x="257" y="394" width="1" height="1" opacity="0.6"/><rect x="279" y="394" width="1" height="1" opacity="0.6"/><rect x="300" y="394" width="1" height="1" opacity="0.6"/><rect x="322" y="394" width="1" height="1" opacity="0.6"/><rect x="343" y="394" width="1" height="1" opacity="0.6"/><rect x="365" y="394" width="1" height="1" opacity="0.6"/><rect x="387" y="394" width="1" height="1" opacity="0.6"/><rect x="408" y="394" width="1" height="1" opacity="0.6"/><rect x="430" y="394" width="1" height="1" opacity="0.6"/><rect x="451" y="394" width="1" height="1" opacity="0.6"/><rect x="473" y="394" width="1" height="1" opacity="0.6"/><rect x="495" y="394" width="1" height="1" opacity="0.6"/><rect x="516" y="394" width="1" height="1" opacity="0.6"/><rect x="538" y="394" width="1" height="1" opacity="0.6"/><rect x="559" y="394" width="1" height="1" opacity="0.6"/><rect x="581" y="394" width="1" height="1" opacity="0.6"/><rect x="602" y="394" width="1" height="1" opacity="0.6"/><rect x="624" y="394" width="1" height="1" opacity="0.6"/><rect x="646" y="394" width="1" height="1" opacity="0.6"/><rect x="667" y="394" width="1" height="1" opacity="0.6"/><rect x="689" y="394" width="1" height="1" opacity="0.6"/><rect x="710" y="394" width="1" height="1" opacity="0.6"/><rect x="732" y="394" width="1" height="1" opacity="0.6"/><rect x="754" y="394" width="1" height="1" opacity="0.6"/><rect x="775" y="394" width="1" height="1" opacity="0.6"/><rect x="797" y="394" width="1" height="1" opacity="0.6"/><rect x="818" y="394" width="1" height="1" opacity="0.6"/><rect x="840" y="394" width="1" height="1" opacity="0.6"/><rect x="862" y="394" width="1" height="1" opacity="0.6"/><rect x="883" y="394" width="1" height="1" opacity="0.6"/><rect x="905" y="394" width="1" height="1" opacity="0.6"/><rect x="926" y="394" width="1" height="1" opacity="0.6"/><rect x="948" y="394" width="1" height="1" opacity="0.6"/><rect x="970" y="394" width="1" height="1" opacity="0.6"/><rect x="991" y="394" width="1" height="1" opacity="0.6"/><rect x="1013" y="394" width="1" height="1" opacity="0.6"/><rect x="1034" y="394" width="1" height="1" opacity="0.6"/><rect x="1056" y="394" width="1" height="1" opacity="0.6"/><rect x="1077" y="394" width="1" height="1" opacity="0.6"/><rect x="20" y="454" width="1" height="1" opacity="0.6"/><rect x="41" y="454" width="1" height="1" opacity="0.6"/><rect x="63" y="454" width="1" height="1" opacity="0.6"/><rect x="84" y="454" width="1" height="1" opacity="0.6"/><rect x="106" y="454" width="1" height="1" opacity="0.6"/><rect x="127" y="454" width="1" height="1" opacity="0.6"/><rect x="149" y="454" width="1" height="1" opacity="0.6"/><rect x="171" y="454" width="1" height="1" opacity="0.6"/><rect x="192" y="454" width="1" height="1" opacity="0.6"/><rect x="214" y="454" width="1" height="1" opacity="0.6"/><rect x="235" y="454" width="1" height="1" opacity="0.6"/><rect x="257" y="454" width="1" height="1" opacity="0.6"/><rect x="279" y="454" width="1" height="1" opacity="0.6"/><rect x="300" y="454" width="1" height="1" opacity="0.6"/><rect x="322" y="454" width="1" height="1" opacity="0.6"/><rect x="343" y="454" width="1" height="1" opacity="0.6"/><rect x="365" y="454" width="1" height="1" opacity="0.6"/><rect x="387" y="454" width="1" height="1" opacity="0.6"/><rect x="408" y="454" width="1" height="1" opacity="0.6"/><rect x="430" y="454" width="1" height="1" opacity="0.6"/><rect x="451" y="454" width="1" height="1" opacity="0.6"/><rect x="473" y="454" width="1" height="1" opacity="0.6"/><rect x="495" y="454" width="1" height="1" opacity="0.6"/><rect x="516" y="454" width="1" height="1" opacity="0.6"/><rect x="538" y="454" width="1" height="1" opacity="0.6"/><rect x="559" y="454" width="1" height="1" opacity="0.6"/><rect x="581" y="454" width="1" height="1" opacity="0.6"/><rect x="602" y="454" width="1" height="1" opacity="0.6"/><rect x="624" y="454" width="1" height="1" opacity="0.6"/><rect x="646" y="454" width="1" height="1" opacity="0.6"/><rect x="667" y="454" width="1" height="1" opacity="0.6"/><rect x="689" y="454" width="1" height="1" opacity="0.6"/><rect x="710" y="454" width="1" height="1" opacity="0.6"/><rect x="732" y="454" width="1" height="1" opacity="0.6"/><rect x="754" y="454" width="1" height="1" opacity="0.6"/><rect x="775" y="454" width="1" height="1" opacity="0.6"/><rect x="797" y="454" width="1" height="1" opacity="0.6"/><rect x="818" y="454" width="1" height="1" opacity="0.6"/><rect x="840" y="454" width="1" height="1" opacity="0.6"/><rect x="862" y="454" width="1" height="1" opacity="0.6"/><rect x="883" y="454" width="1" height="1" opacity="0.6"/><rect x="905" y="454" width="1" height="1" opacity="0.6"/><rect x="926" y="454" width="1" height="1" opacity="0.6"/><rect x="948" y="454" width="1" height="1" opacity="0.6"/><rect x="970" y="454" width="1" height="1" opacity="0.6"/><rect x="991" y="454" width="1" height="1" opacity="0.6"/><rect x="1013" y="454" width="1" height="1" opacity="0.6"/><rect x="1034" y="454" width="1" height="1" opacity="0.6"/><rect x="1056" y="454" width="1" height="1" opacity="0.6"/><rect x="1077" y="454" width="1" height="1" opacity="0.6"/></g><path fill="#109a14" shape-rendering="crispEdges" d="M0 169 h1 V170 h1 V172 h1 V174 h1 V175 h2 V179 h1 V181 h1 V182 h1 V183 h1 V186 h1 V187 h1 V188 h1 V190 h1 V192 h1 V194 h1 V196 h2 V199 h1 V200 h1 V201 h1 V203 h1 V205 h2 V207 h1 V209 h1 V210 h1 V211 h1 V212 h1 V213 h1 V215 h1 V216 h1 V217 h1 V218 h1 V219 h1 V218 h1 V219 h1 V221 h2 V224 h1 V225 h1 V226 h2 V227 h2 V228 h1 V229 h3 V230 h2 V229 h1 V231 h4 V232 h1 V231 h3 V230 h1 V228 h1 V231 h1 V228 h2 V229 h3 V228 h1 V227 h1 V224 h1 V227 h1 V226 h1 V224 h2 V223 h1 V222 h1 V221 h1 V220 h1 V217 h1 V218 h1 V217 h1 V216 h1 V215 h1 V214 h1 V213 h1 V212 h1 V210 h1 V207 h2 V204 h3 V202 h1 V198 h1 V199 h1 V197 h1 V196 h1 V194 h1 V192 h1 V191 h1 V189 h1 V187 h1 V186 h1 V185 h1 V182 h1 V181 h1 V179 h1 V177 h1 V174 h2 V173 h1 V168 h1 V169 h1 V167 h1 V165 h1 V164 h1 V160 h2 V159 h1 V157 h1 V155 h1 V154 h1 V150 h1 V151 h1 V149 h1 V147 h1 V145 h1 V142 h1 V143 h1 V139 h1 V140 h1 V138 h1 V137 h1 V136 h1 V132 h1 V133 h1 V132 h1 V129 h1 V130 h1 V126 h1 V127 h1 V125 h2 V122 h1 V121 h1 V122 h1 V121 h1 V120 h2 V119 h1 V118 h2 V115 h1 V114 h1 V116 h1 V115 h1 V114 h4 V113 h1 V114 h1 V113 h1 V111 h1 V114 h1 V112 h1 V111 h1 V113 h3 V114 h1 V115 h3 V116 h1 V114 h1 V115 h1 V118 h2 V119 h2 V120 h1 V121 h1 V122 h1 V123 h1 V122 h1 V125 h1 V127 h1 V128 h1 V129 h1 V128 h1 V131 h1 V133 h1 V134 h1 V135 h1 V136 h1 V138 h1 V139 h1 V140 h1 V142 h1 V144 h1 V145 h1 V147 h1 V149 h1 V150 h1 V151 h1 V152 h2 V156 h1 V158 h1 V160 h1 V162 h2 V164 h1 V167 h1 V168 h1 V170 h1 V172 h1 V173 h1 V172 h1 V176 h1 V178 h2 V181 h1 V183 h2 V186 h1 V189 h1 V190 h1 V191 h1 V193 h1 V195 h1 V196 h1 V198 h1 V199 h1 V201 h1 V203 h1 V204 h1 V205 h1 V207 h1 V208 h1 V210 h2 V212 h1 V213 h1 V214 h1 V215 h1 V214 h1 V218 h2 V219 h1 V221 h1 V222 h2 V223 h1 V225 h1 V226 h3 V227 h1 V228 h1 V229 h3 V228 h1 V230 h3 V231 h2 V230 h1 V231 h7 V230 h3 V229 h1 V226 h1 V228 h2 V227 h1 V226 h1 V225 h2 V224 h1 V221 h1 V222 h2 V221 h1 V220 h1 V219 h1 V217 h2 V216 h1 V215 h1 V210 h1 V209 h1 V211 h1 V209 h1 V208 h1 V207 h1 V205 h1 V203 h1 V200 h2 V199 h1 V198 h1 V196 h1 V195 h1 V193 h1 V191 h1 V190 h1 V188 h1 V186 h1 V182 h1 V184 h1 V179 h1 V180 h1 V178 h1 V176 h1 V175 h1 V173 h1 V171 h1 V170 h1 V167 h1 V166 h1 V164 h1 V163 h1 V161 h1 V159 h1 V156 h2 V152 h1 V153 h1 V151 h1 V150 h1 V148 h1 V146 h1 V144 h1 V143 h1 V141 h2 V136 h1 V137 h1 V136 h1 V135 h1 V133 h1 V132 h1 V130 h2 V128 h1 V127 h1 V125 h1 V126 h1 V124 h1 V123 h1 V122 h1 V121 h1 V120 h1 V119 h2 V118 h1 V117 h1 V116 h1 V115 h1 V113 h1 V115 h1 V114 h3 V112 h2 V111 h1 V114 h1 V112 h1 V114 h2 V113 h3 V114 h1 V112 h1 V115 h1 V112 h1 V115 h2 V116 h1 V114 h1 V117 h1 V118 h2 V119 h1 V120 h1 V121 h1 V122 h1 V123 h1 V124 h1 V125 h1 V126 h1 V127 h1 V128 h1 V129 h1 V131 h1 V132 h1 V133 h1 V132 h1 V136 h1 V137 h1 V138 h1 V140 h1 V141 h1 V143 h1 V144 h1 V146 h1 V148 h1 V149 h1 V150 h1 V152 h1 V155 h1 V156 h1 V157 h1 V159 h1 V161 h1 V163 h1 V164 h1 V166 h1 V167 h1 V169 h1 V171 h1 V173 h1 V174 h1 V176 h1 V178 h1 V179 h2 V183 h1 V184 h1 V186 h1 V187 h1 V190 h1 V191 h1 V192 h1 V194 h1 V196 h1 V197 h1 V199 h1 V201 h1 V202 h1 V201 h1 V205 h1 V206 h1 V208 h1 V209 h1 V211 h1 V212 h1 V213 h1 V212 h1 V215 h1 V216 h1 V218 h1 V217 h1 V219 h2 V221 h1 V223 h2 V224 h1 V225 h1 V226 h2 V227 h1 V226 h1 V228 h1 V229 h2 V230 h2 V229 h1 V230 h1 V231 h3 V232 h1 V229 h2 V231 h3 V228 h1 V230 h4 V229 h1 V228 h3 V226 h2 V225 h2 V224 h1 V223 h1 V221 h1 V219 h1 V220 h1 V219 h1 V216 h1 V217 h1 V215 h1 V214 h2 V210 h1 V211 h1 V210 h1 V208 h1 V207 h1 V205 h1 V204 h1 V203 h1 V201 h1 V200 h1 V196 h1 V194 h1 V193 h1 V194 h1 V191 h1 V190 h1 V189 h1 V185 h2 V184 h1 V181 h2 V178 h1 V177 h1 V175 h1 V173 h1 V171 h1 V170 h1 V168 h1 V167 h1 V165 h1 V161 h2 V160 h1 V158 h1 V156 h1 V155 h1 V153 h1 V151 h1 V150 h1 V148 h1 V147 h1 V143 h1 V144 h1 V142 h1 V140 h1 V139 h1 V136 h1 V137 h1 V135 h1 V134 h1 V130 h1 V131 h1 V130 h1 V128 h1 V127 h1 V124 h1 V126 h1 V123 h3 V121 h2 V120 h1 V119 h1 V118 h2 V117 h2 V116 h2 V115 h2 V112 h1 V114 h3 V113 h4 V114 h2 V113 h1 V114 h2 V112 h1 V114 h1 V115 h1 V116 h3 V117 h1 V118 h2 V119 h1 V121 h2 V122 h1 V123 h1 V124 h1 V122 h1 V125 h1 V126 h1 V128 h1 V129 h1 V130 h1 V131 h1 V133 h1 V135 h1 V136 h1 V137 h1 V139 h1 V138 h1 V139 h1 V143 h1 V144 h1 V146 h1 V147 h1 V149 h1 V150 h1 V152 h1 V154 h1 V155 h1 V157 h1 V159 h1 V160 h1 V162 h1 V163 h1 V166 h1 V167 h1 V168 h1 V171 h1 V170 h1 V174 h1 V175 h1 V177 h2 V181 h1 V182 h1 V184 h1 V186 h1 V187 h1 V189 h2 V192 h1 V193 h1 V195 h1 V197 h1 V198 h1 V200 h1 V202 h2 V204 h1 V206 h1 V208 h2 V210 h2 V213 h1 V214 h1 V215 h1 V214 h1 V215 h1 V218 h1 V219 h1 V220 h1 V221 h1 V220 h1 V223 h2 V224 h1 V225 h1 V227 h2 V225 h1 V228 h2 V229 h2 V230 h1 V231 h2 V229 h1 V231 h1 V232 h2 V231 h6 V230 h3 V228 h1 V227 h1 V229 h1 V228 h2 V227 h1 V226 h2 V224 h1 V223 h2 V222 h1 V221 h1 V220 h1 V219 h1 V218 h1 V215 h1 V216 h1 V215 h1 V213 h1 V212 h1 V211 h1 V209 h1 V208 h2 V204 h1 V205 h1 V203 h1 V201 h1 V200 h1 V199 h1 V195 h2 V194 h1 V192 h1 V190 h1 V187 h2 V184 h2 V181 h1 V179 h1 V177 h1 V175 h2 V174 h1 V172 h1 V171 h1 V167 h1 V166 h1 V165 h1 V164 h1 V159 h1 V160 h1 V158 h1 V157 h1 V155 h1 V153 h1 V152 h1 V150 h1 V147 h2 V146 h1 V144 h1 V142 h1 V141 h1 V140 h1 V139 h1 V137 h1 V135 h2 V133 h1 V131 h1 V130 h1 V129 h1 V128 h1 V127 h1 V126 h1 V125 h1 V123 h2 V122 h1 V121 h1 V120 h1 V119 h1 V117 h1 V118 h2 V117 h1 V116 h1 V114 h1 V115 h1 V114 h3 V113 h1 V114 h1 V113 h2 V114 h2 V113 h2 V114 h4 V115 h1 V114 h1 V116 h3 V115 h1 V116 h1 V118 h1 V119 h2 V121 h1 V119 h1 V122 h1 V123 h1 V124 h1 V125 h1 V124 h1 V127 h1 V128 h1 V130 h1 V129 h1 V133 h1 V134 h1 V133 h1 V136 h1 V138 h1 V137 h1 V141 h1 V142 h1 V143 h1 V145 h1 V147 h1 V146 h1 V150 h1 V152 h1 V153 h1 V155 h1 V156 h1 V158 h1 V159 h2 V163 h1 V165 h1 V166 h1 V168 h1 V170 h1 V171 h1 V174 h1 V175 h2 V178 h1 V180 h1 V182 h1 V184 h1 V185 h2 V186 h1 V190 h1 V192 h1 V191 h1 V195 h1 V196 h1 V198 h1 V200 h1 V202 h3 V205 h1 V206 h1 V208 h2 V210 h1 V211 h1 V214 h1 V215 h1 V216 h1 V217 h1 V218 h1 V219 h1 V220 h1 V221 h1 V222 h1 V221 h1 V223 h1 V224 h1 V225 h1 V226 h1 V227 h2 V228 h1 V227 h1 V229 h1 V230 h1 V228 h1 V230 h2 V231 h4 V230 h1 V231 h1 V230 h1 V231 h1 V229 h1 V228 h1 V230 h1 V231 h1 V228 h1 V230 h1 V227 h1 V229 h1 V226 h1 V228 h1 V225 h1 V226 h2 V225 h2 V223 h1 V222 h2 V221 h1 V219 h2 V218 h1 V216 h1 V215 h1 V214 h1 V213 h1 V211 h2 V209 h1 V208 h1 V206 h1 V205 h1 V201 h1 V200 h2 V199 h1 V198 h1 V195 h1 V194 h1 V191 h2 V190 h1 V188 h1 V186 h1 V185 h1 V183 h1 V181 h1 V180 h1 V177 h1 V176 h1 V175 h1 V173 h1 V171 h1 V169 h1 V167 h1 V166 h1 V164 h1 V163 h1 V161 h1 V159 h1 V157 h1 V156 h1 V154 h1 V152 h1 V151 h1 V149 h1 V146 h2 V144 h1 V143 h1 V141 h1 V140 h1 V138 h1 V137 h1 V136 h1 V134 h1 V133 h1 V132 h1 V131 h1 V129 h1 V128 h1 V127 h1 V126 h1 V125 h1 V124 h1 V123 h1 V122 h1 V121 h2 V119 h2 V117 h2 V116 h1 V114 h1 V116 h1 V113 h1 V115 h1 V114 h4 V113 h3 V111 h1 V114 h1 V113 h3 V114 h1 V115 h1 V114 h1 V115 h2 V116 h2 V115 h1 V117 h1 V116 h1 V119 h1 V120 h1 V119 h1 V121 h1 V122 h1 V123 h1 V124 h1 V125 h1 V126 h1 V127 h1 V128 h1 V129 h1 V131 h1 V132 h1 V131 h1 V132 h1 V136 h1 V138 h2 V141 h1 V142 h1 V144 h1 V145 h1 V146 h1 V148 h1 V149 h1 V151 h1 V153 h1 V155 h1 V156 h1 V157 h1 V159 h1 V161 h1 V171 h-1 V169 h-1 V167 h-1 V165 h-2 V162 h-1 V161 h-1 V159 h-1 V160 h-1 V156 h-1 V155 h-1 V153 h-1 V151 h-1 V150 h-1 V148 h-2 V146 h-1 V145 h-1 V143 h-1 V142 h-1 V141 h-1 V140 h-1 V139 h-1 V137 h-1 V136 h-3 V134 h-1 V133 h-1 V132 h-1 V131 h-1 V130 h-2 V131 h-1 V128 h-1 V127 h-1 V129 h-1 V127 h-1 V126 h-2 V125 h-1 V127 h-1 V125 h-2 V126 h-1 V125 h-1 V124 h-6 V126 h-1 V125 h-1 V126 h-1 V125 h-1 V126 h-1 V127 h-1 V128 h-1 V127 h-1 V129 h-3 V130 h-1 V133 h-1 V132 h-1 V133 h-2 V134 h-1 V136 h-1 V137 h-1 V138 h-2 V139 h-1 V141 h-1 V143 h-2 V144 h-1 V147 h-2 V149 h-1 V150 h-1 V152 h-1 V153 h-1 V155 h-1 V156 h-1 V157 h-1 V160 h-2 V162 h-1 V164 h-1 V165 h-1 V167 h-1 V169 h-1 V172 h-2 V174 h-1 V176 h-1 V177 h-1 V179 h-1 V181 h-1 V183 h-1 V184 h-1 V186 h-1 V188 h-1 V189 h-1 V190 h-1 V194 h-2 V196 h-1 V197 h-1 V200 h-2 V202 h-1 V205 h-1 V207 h-2 V209 h-1 V210 h-1 V212 h-1 V215 h-1 V217 h-1 V218 h-2 V219 h-1 V221 h-1 V222 h-1 V224 h-1 V225 h-1 V227 h-2 V228 h-1 V229 h-1 V230 h-1 V233 h-1 V232 h-1 V235 h-1 V234 h-1 V235 h-1 V238 h-1 V236 h-1 V237 h-1 V238 h-2 V239 h-1 V242 h-1 V240 h-2 V241 h-1 V242 h-3 V241 h-1 V242 h-4 V244 h-1 V241 h-1 V242 h-2 V241 h-1 V243 h-2 V241 h-1 V239 h-1 V242 h-1 V238 h-2 V237 h-1 V236 h-2 V235 h-1 V234 h-2 V233 h-1 V232 h-2 V229 h-1 V230 h-1 V227 h-1 V226 h-1 V227 h-1 V223 h-2 V221 h-1 V220 h-1 V219 h-2 V216 h-1 V214 h-2 V211 h-1 V210 h-1 V208 h-2 V204 h-2 V202 h-1 V200 h-1 V198 h-1 V197 h-1 V195 h-1 V194 h-1 V191 h-1 V190 h-1 V188 h-1 V187 h-1 V185 h-2 V183 h-1 V180 h-1 V177 h-2 V174 h-1 V172 h-1 V171 h-1 V169 h-1 V170 h-1 V166 h-1 V164 h-1 V163 h-1 V161 h-1 V159 h-1 V158 h-1 V157 h-1 V155 h-1 V154 h-1 V152 h-2 V150 h-1 V149 h-1 V148 h-1 V145 h-1 V144 h-2 V141 h-2 V139 h-1 V138 h-1 V137 h-1 V136 h-1 V135 h-1 V134 h-1 V133 h-1 V132 h-1 V131 h-1 V132 h-1 V129 h-2 V128 h-1 V127 h-4 V125 h-2 V126 h-1 V125 h-2 V124 h-1 V126 h-1 V124 h-3 V125 h-1 V124 h-1 V125 h-1 V126 h-1 V125 h-2 V126 h-4 V128 h-2 V129 h-1 V130 h-2 V133 h-1 V131 h-1 V132 h-1 V136 h-2 V135 h-1 V136 h-1 V138 h-2 V139 h-1 V141 h-2 V143 h-1 V145 h-1 V148 h-1 V147 h-1 V148 h-1 V150 h-1 V151 h-1 V152 h-1 V154 h-1 V155 h-1 V159 h-2 V160 h-1 V164 h-1 V163 h-1 V167 h-1 V168 h-2 V170 h-1 V173 h-2 V175 h-1 V176 h-1 V178 h-1 V180 h-1 V181 h-1 V183 h-1 V185 h-1 V187 h-1 V189 h-1 V192 h-1 V194 h-2 V195 h-1 V197 h-1 V199 h-1 V200 h-1 V202 h-1 V204 h-1 V206 h-1 V207 h-1 V208 h-1 V211 h-1 V212 h-1 V213 h-1 V214 h-1 V216 h-1 V219 h-2 V220 h-1 V221 h-1 V222 h-1 V224 h-1 V226 h-1 V229 h-1 V227 h-1 V229 h-1 V232 h-1 V233 h-1 V231 h-1 V232 h-1 V235 h-1 V237 h-2 V238 h-1 V236 h-1 V238 h-3 V239 h-1 V240 h-1 V241 h-3 V242 h-1 V241 h-1 V242 h-3 V245 h-1 V242 h-3 V244 h-1 V242 h-1 V241 h-3 V240 h-1 V239 h-2 V241 h-2 V238 h-1 V237 h-2 V235 h-2 V233 h-1 V235 h-1 V232 h-1 V231 h-1 V230 h-1 V229 h-1 V228 h-1 V226 h-1 V225 h-1 V224 h-1 V223 h-1 V221 h-1 V220 h-2 V217 h-1 V216 h-1 V215 h-1 V213 h-1 V211 h-1 V210 h-1 V209 h-1 V207 h-1 V206 h-1 V203 h-1 V204 h-1 V201 h-1 V198 h-1 V197 h-2 V194 h-1 V191 h-1 V190 h-1 V189 h-1 V187 h-1 V185 h-1 V183 h-1 V182 h-1 V180 h-1 V179 h-1 V176 h-1 V174 h-1 V173 h-1 V172 h-1 V170 h-1 V168 h-1 V167 h-1 V165 h-1 V164 h-1 V162 h-1 V160 h-1 V158 h-1 V157 h-1 V155 h-1 V154 h-1 V152 h-2 V149 h-1 V150 h-1 V147 h-1 V146 h-1 V145 h-2 V144 h-1 V141 h-1 V139 h-1 V141 h-1 V137 h-1 V136 h-1 V135 h-1 V134 h-3 V131 h-2 V130 h-2 V129 h-1 V128 h-1 V127 h-2 V126 h-3 V127 h-1 V125 h-2 V124 h-5 V125 h-1 V124 h-2 V125 h-3 V126 h-1 V125 h-1 V126 h-1 V127 h-2 V128 h-1 V129 h-2 V130 h-1 V131 h-1 V132 h-2 V133 h-1 V134 h-1 V135 h-1 V136 h-1 V137 h-1 V138 h-1 V139 h-1 V140 h-1 V142 h-1 V144 h-2 V145 h-1 V148 h-2 V150 h-2 V152 h-1 V154 h-1 V158 h-1 V156 h-1 V158 h-1 V160 h-1 V163 h-2 V164 h-1 V166 h-1 V168 h-1 V169 h-1 V171 h-1 V172 h-1 V174 h-1 V176 h-1 V177 h-1 V180 h-1 V183 h-2 V186 h-1 V188 h-1 V191 h-1 V190 h-1 V192 h-1 V194 h-1 V195 h-1 V197 h-1 V198 h-1 V200 h-1 V204 h-2 V207 h-2 V210 h-1 V209 h-1 V211 h-1 V212 h-1 V214 h-1 V216 h-1 V217 h-1 V219 h-2 V221 h-1 V222 h-1 V224 h-1 V225 h-1 V227 h-1 V229 h-2 V230 h-1 V231 h-2 V232 h-1 V233 h-1 V234 h-1 V235 h-1 V236 h-1 V237 h-2 V238 h-2 V239 h-1 V240 h-1 V242 h-1 V241 h-2 V243 h-1 V241 h-2 V242 h-1 V244 h-1 V242 h-1 V243 h-1 V242 h-1 V241 h-1 V242 h-1 V241 h-1 V242 h-1 V241 h-3 V240 h-1 V242 h-1 V239 h-1 V238 h-2 V237 h-1 V236 h-2 V235 h-1 V234 h-1 V233 h-1 V232 h-1 V231 h-1 V230 h-1 V229 h-1 V228 h-1 V227 h-1 V228 h-1 V224 h-1 V223 h-2 V220 h-1 V219 h-1 V218 h-1 V216 h-1 V215 h-1 V213 h-1 V211 h-1 V210 h-1 V208 h-2 V206 h-1 V204 h-1 V202 h-1 V201 h-1 V199 h-1 V198 h-1 V196 h-2 V192 h-1 V191 h-1 V189 h-1 V188 h-1 V185 h-1 V184 h-1 V182 h-1 V180 h-1 V179 h-1 V177 h-2 V175 h-1 V172 h-2 V169 h-1 V167 h-1 V165 h-1 V164 h-2 V161 h-1 V159 h-1 V157 h-1 V156 h-1 V154 h-1 V156 h-1 V152 h-1 V150 h-1 V149 h-1 V148 h-1 V146 h-1 V145 h-1 V144 h-1 V142 h-1 V141 h-1 V140 h-1 V139 h-1 V140 h-1 V137 h-1 V136 h-1 V134 h-1 V133 h-2 V131 h-1 V133 h-1 V131 h-1 V129 h-2 V128 h-2 V127 h-1 V129 h-1 V126 h-2 V125 h-2 V124 h-6 V125 h-1 V124 h-2 V126 h-1 V125 h-1 V127 h-1 V126 h-1 V125 h-1 V126 h-1 V128 h-1 V127 h-2 V128 h-1 V131 h-2 V130 h-1 V131 h-1 V132 h-1 V133 h-1 V134 h-1 V137 h-1 V136 h-2 V140 h-1 V139 h-1 V140 h-1 V141 h-1 V143 h-2 V145 h-1 V146 h-1 V147 h-1 V149 h-1 V150 h-1 V154 h-1 V153 h-1 V155 h-1 V156 h-1 V157 h-1 V160 h-1 V161 h-1 V162 h-1 V164 h-1 V166 h-1 V167 h-1 V169 h-1 V170 h-1 V172 h-1 V176 h-2 V178 h-1 V179 h-1 V182 h-1 V183 h-1 V184 h-1 V186 h-1 V190 h-1 V191 h-2 V193 h-1 V194 h-1 V196 h-1 V198 h-1 V199 h-1 V203 h-1 V205 h-2 V206 h-1 V207 h-1 V209 h-1 V211 h-1 V212 h-1 V213 h-1 V215 h-1 V217 h-1 V218 h-1 V221 h-1 V223 h-1 V222 h-1 V223 h-1 V224 h-1 V226 h-1 V227 h-1 V228 h-1 V229 h-1 V231 h-2 V232 h-1 V233 h-1 V234 h-1 V235 h-1 V236 h-1 V237 h-1 V238 h-3 V239 h-1 V240 h-2 V241 h-2 V243 h-1 V241 h-1 V242 h-4 V244 h-2 V242 h-4 V241 h-2 V240 h-2 V241 h-1 V242 h-1 V238 h-2 V237 h-1 V238 h-1 V236 h-1 V235 h-1 V236 h-1 V234 h-2 V231 h-1 V230 h-1 V229 h-1 V228 h-3 V225 h-1 V223 h-1 V224 h-1 V221 h-1 V220 h-2 V216 h-1 V215 h-1 V214 h-1 V212 h-1 V210 h-1 V209 h-1 V207 h-1 V206 h-1 V205 h-1 V203 h-1 V201 h-1 V200 h-1 V198 h-1 V197 h-1 V195 h-1 V193 h-1 V191 h-2 V187 h-1 V186 h-2 V183 h-1 V181 h-1 V179 h-1 V177 h-1 V176 h-1 V174 h-1 V172 h-1 V171 h-1 V169 h-1 V167 h-1 V165 h-2 V163 h-1 V162 h-2 V158 h-1 V156 h-1 V155 h-1 V153 h-1 V152 h-1 V150 h-1 V149 h-1 V148 h-1 V146 h-2 V144 h-1 V142 h-1 V141 h-1 V140 h-1 V139 h-1 V138 h-1 V136 h-1 V135 h-2 V134 h-1 V133 h-1 V132 h-2 V130 h-2 V129 h-1 V128 h-2 V127 h-2 V126 h-1 V125 h-1 V126 h-1 V125 h-2 V124 h-1 V125 h-1 V124 h-5 V126 h-1 V124 h-2 V125 h-1 V126 h-1 V127 h-1 V126 h-1 V127 h-1 V129 h-1 V127 h-1 V129 h-2 V130 h-2 V131 h-1 V132 h-1 V133 h-1 V135 h-2 V136 h-2 V137 h-1 V139 h-1 V140 h-1 V143 h-1 V142 h-1 V143 h-1 V145 h-2 V147 h-1 V151 h-1 V150 h-1 V151 h-1 V152 h-1 V154 h-1 V156 h-1 V157 h-1 V159 h-1 V160 h-1 V162 h-1 V164 h-1 V166 h-1 V167 h-1 V169 h-1 V170 h-1 V172 h-1 V173 h-1 V175 h-1 V179 h-1 V178 h-1 V180 h-1 V182 h-1 V186 h-1 V187 h-2 V191 h-1 V190 h-1 V195 h-1 V196 h-1 V198 h-1 V197 h-1 V199 h-1 V201 h-1 V202 h-1 V204 h-1 V205 h-1 V207 h-1 V209 h-1 V212 h-1 V211 h-1 V213 h-1 V214 h-1 V216 h-1 V218 h-1 V219 h-1 V220 h-1 V222 h-1 V223 h-1 V224 h-1 V225 h-1 V229 h-1 V228 h-1 V230 h-2 V233 h-1 V231 h-1 V233 h-1 V234 h-1 V235 h-1 V236 h-1 V237 h-2 V238 h-2 V239 h-1 V240 h-2 V241 h-3 V243 h-1 V242 h-1 V243 h-1 V242 h-8 V241 h-3 V240 h-3 V239 h-2 V238 h-1 V237 h-1 V236 h-1 V235 h-1 V234 h-1 V233 h-2 V232 h-1 V230 h-1 V229 h-2 V227 h-1 V226 h-1 V225 h-1 V226 h-1 V222 h-1 V221 h-1 V220 h-1 V219 h-1 V217 h-2 V214 h-1 V213 h-1 V211 h-1 V209 h-1 V208 h-1 V207 h-2 V204 h-1 V202 h-1 V201 h-1 V198 h-1 V197 h-2 V194 h-1 V192 h-1 V190 h-1 V188 h-1 V189 h-1 V185 h-2 V181 h-1 V179 h-2 Z"/><path d="M1075.4 49.12 H1078 M1075.4 61.04 H1078 M1075.4 72.96 H1078 M1075.4 84.88 H1078 M1075.4 108.72 H1078 M1075.4 120.64 H1078 M1075.4 132.56 H1078 M1075.4 144.48 H1078 M1075.4 168.32 H1078 M1075.4 180.24 H1078 M1075.4 192.16 H1078 M1075.4 204.08 H1078 M1075.4 227.92 H1078 M1075.4 239.84 H1078 M1075.4 251.76 H1078 M1075.4 263.68 H1078 M1075.4 287.52 H1078 M1075.4 299.44 H1078 M1075.4 311.36 H1078 M1075.4 323.28 H1078 M1075.4 347.12 H1078 M1075.4 359.04 H1078 M1075.4 370.96 H1078 M1075.4 382.88 H1078 M1075.4 406.72 H1078 M1075.4 418.64 H1078 M1075.4 430.56 H1078 M1075.4 442.48 H1078 M1075.4 466.32 H1078 M1075.4 478.24 H1078 M1075.4 490.16 H1078 M1075.4 502.08 H1078" stroke="#0c8a0c" stroke-width="0.9" fill="none"/><path d="M1073.8 96.8 H1078 M1073.8 156.4 H1078 M1073.8 216 H1078 M1073.8 275.6 H1078 M1073.8 335.2 H1078 M1073.8 394.8 H1078 M1073.8 454.4 H1078" stroke="#12b412" stroke-width="1" fill="none"/><rect x="1078" y="37" width="1" height="478" fill="#33343a"/><path d="M20.04 511.6 V514.3 M41.63 511.6 V514.3 M63.22 511.6 V514.3 M84.81 511.6 V514.3 M127.99 511.6 V514.3 M149.58 511.6 V514.3 M171.17 511.6 V514.3 M192.76 511.6 V514.3 M235.94 511.6 V514.3 M257.53 511.6 V514.3 M279.12 511.6 V514.3 M300.71 511.6 V514.3 M343.89 511.6 V514.3 M365.48 511.6 V514.3 M387.07 511.6 V514.3 M408.66 511.6 V514.3 M451.84 511.6 V514.3 M473.43 511.6 V514.3 M495.02 511.6 V514.3 M516.61 511.6 V514.3 M559.79 511.6 V514.3 M581.38 511.6 V514.3 M602.97 511.6 V514.3 M624.56 511.6 V514.3 M667.74 511.6 V514.3 M689.33 511.6 V514.3 M710.92 511.6 V514.3 M732.51 511.6 V514.3 M775.69 511.6 V514.3 M797.28 511.6 V514.3 M818.87 511.6 V514.3 M840.46 511.6 V514.3 M883.64 511.6 V514.3 M905.23 511.6 V514.3 M926.82 511.6 V514.3 M948.41 511.6 V514.3 M991.59 511.6 V514.3 M1013.18 511.6 V514.3 M1034.77 511.6 V514.3 M1056.36 511.6 V514.3" stroke="#0b7a0b" stroke-width="0.9" fill="none"/><path d="M106.4 511.3 V514.3 M214.35 511.3 V514.3 M322.3 511.3 V514.3 M430.25 511.3 V514.3 M538.2 511.3 V514.3 M646.15 511.3 V514.3 M754.1 511.3 V514.3 M862.05 511.3 V514.3 M970 511.3 V514.3 M1077.5 511.3 V514.3" stroke="#a0a0a0" stroke-width="0.9" fill="none"/><g fill="#12c812" stroke="#12c812" stroke-width="0.25" font-family="'Liberation Sans',sans-serif" font-size="8.8"><text transform="translate(1072.4 40.2) scale(0.86 1)" text-anchor="end">80mV</text><text transform="translate(1072.4 99.8) scale(0.86 1)" text-anchor="end">60mV</text><text transform="translate(1072.4 159.4) scale(0.86 1)" text-anchor="end">40mV</text><text transform="translate(1072.4 219) scale(0.86 1)" text-anchor="end">20mV</text><text transform="translate(1072.4 278.6) scale(0.86 1)" text-anchor="end">0V</text><text transform="translate(1072.4 338.2) scale(0.86 1)" text-anchor="end">-20mV</text><text transform="translate(1072.4 397.8) scale(0.86 1)" text-anchor="end">-40mV</text><text transform="translate(1072.4 457.4) scale(0.86 1)" text-anchor="end">-60mV</text><text transform="translate(1072.4 517) scale(0.86 1)" text-anchor="end">-80mV</text><text transform="translate(-1.55 508) scale(0.86 1)" text-anchor="middle">-2.5ms</text><text transform="translate(106.4 508) scale(0.86 1)" text-anchor="middle">-2ms</text><text transform="translate(214.35 508) scale(0.86 1)" text-anchor="middle">-1.5ms</text><text transform="translate(322.3 508) scale(0.86 1)" text-anchor="middle">-1ms</text><text transform="translate(430.25 508) scale(0.86 1)" text-anchor="middle">-500µs</text><text transform="translate(538.2 508) scale(0.86 1)" text-anchor="middle">0s</text><text transform="translate(646.15 508) scale(0.86 1)" text-anchor="middle">500µs</text><text transform="translate(1078.35 508) scale(0.86 1)" text-anchor="middle">2.5ms</text></g><path d="M533.7 37.2 H542.7 V47.3 L538.2 52 L533.7 47.3 Z" fill="#0cb0fa"/><text x="538.1" y="45.2" text-anchor="middle" font-family="'Liberation Sans',sans-serif" font-size="6.2" fill="#0a78b8">T</text><path d="M1.2 270.2 H12.5 L16.2 275.4 L12.5 280.6 H1.2 Z" fill="#04e604"/><text x="6.6" y="277.7" text-anchor="middle" font-family="'Liberation Sans',sans-serif" font-size="6.4" fill="#0a6a0a">C3</text><path d="M1058 178 L1063.2 173 H1073.4 V183 H1063.2 Z" fill="#0f9a0f"/></g></svg>
<svg class="ui" width="1079" height="603" viewBox="0 0 1079 603" style="position:absolute;left:0;top:0"><defs><linearGradient id="g0" x1="0" y1="0" x2="0" y2="1"><stop offset="0" stop-color="#4a4d56"/><stop offset="1" stop-color="#2b2c31"/></linearGradient><linearGradient id="g1" x1="0" y1="0" x2="0" y2="1"><stop offset="0" stop-color="#41434b"/><stop offset="1" stop-color="#2a2a2e"/></linearGradient><linearGradient id="g2" x1="0" y1="0" x2="0" y2="1"><stop offset="0" stop-color="#43464e"/><stop offset="1" stop-color="#2a2b30"/></linearGradient><linearGradient id="g3" x1="0" y1="0" x2="0" y2="1"><stop offset="0" stop-color="#474a52"/><stop offset="1" stop-color="#2d2f35"/></linearGradient><linearGradient id="g4" x1="0" y1="0" x2="0" y2="1"><stop offset="0" stop-color="#464950"/><stop offset="1" stop-color="#2a2b30"/></linearGradient></defs>
<rect x="0" y="0" width="1079" height="17.8" fill="#23242b"/>
<rect x="60" y="0" width="45.2" height="17.8" fill="url(#g0)"/>
<rect x="106.6" y="0" width="45.6" height="17.8" fill="url(#g0)"/>
<rect x="154" y="0" width="46" height="17.8" fill="url(#g0)"/>
<rect x="202" y="0" width="146.3" height="17.8" fill="#464953"/>
<rect x="202.9" y="0" width="144.5" height="16.8" fill="#343742"/>
<rect x="202.9" y="0" width="18.9" height="16.8" fill="url(#g1)"/>
<rect x="350.4" y="0" width="231.2" height="17.8" fill="#464953"/>
<rect x="351.3" y="0" width="229.4" height="16.8" fill="#343742"/>
<rect x="351.3" y="0" width="18.9" height="16.8" fill="url(#g1)"/>
<rect x="584" y="0" width="200.4" height="17.8" fill="#464953"/>
<rect x="584.9" y="0" width="198.6" height="16.8" fill="#343742"/>
<rect x="584.9" y="0" width="18.5" height="16.8" fill="url(#g1)"/>
<rect x="785.2" y="0" width="293.8" height="17.8" fill="#3a3c44"/>
<rect x="785.7" y="0" width="31.9" height="17.8" fill="url(#g2)"/>
<rect x="818.42" y="0" width="31.9" height="17.8" fill="url(#g2)"/>
<rect x="851.14" y="0" width="31.9" height="17.8" fill="url(#g2)"/>
<rect x="883.86" y="0" width="31.9" height="17.8" fill="url(#g2)"/>
<rect x="916.58" y="0" width="31.9" height="17.8" fill="url(#g2)"/>
<rect x="949.3" y="0" width="31.9" height="17.8" fill="url(#g2)"/>
<rect x="982.02" y="0" width="31.9" height="17.8" fill="url(#g2)"/>
<rect x="1014.74" y="0" width="31.9" height="17.8" fill="url(#g2)"/>
<rect x="1047.46" y="0" width="31.9" height="17.8" fill="url(#g2)"/>
<rect x="0" y="19.2" width="1079" height="17.9" fill="#23242c"/>
<rect x="0" y="514.2" width="1079" height="0.9" fill="#303030"/>
<rect x="0" y="517.4" width="1079" height="23.4" fill="#232429"/>
<rect x="0" y="542.9" width="1079" height="60.1" fill="#1e1f23"/>
<rect x="0" y="544.7" width="68.1" height="58.3" fill="#333641"/>
<rect x="0" y="544.7" width="68.1" height="14.9" fill="url(#g3)"/>
<rect x="70.5" y="544.7" width="68.1" height="58.3" fill="#333641"/>
<rect x="70.5" y="544.7" width="68.1" height="14.9" fill="url(#g3)"/>
<rect x="141" y="544.7" width="67.2" height="58.3" fill="#333641"/>
<rect x="141" y="544.7" width="67.2" height="15.2" fill="#00aa00"/>
<rect x="141" y="601.9" width="67.2" height="1.1" fill="#00aa00"/>
<rect x="211" y="544.7" width="67.6" height="58.3" fill="#333641"/>
<rect x="211" y="544.7" width="67.6" height="14.9" fill="url(#g3)"/>
<rect x="281.8" y="544.7" width="113" height="58.3" fill="#2f323d"/>
<rect x="281.8" y="544.7" width="113" height="15.2" fill="#4b4b4b"/>
<rect x="889.6" y="542.9" width="38.4" height="60.1" fill="url(#g4)"/>
<rect x="928.6" y="542.9" width="39.6" height="60.1" fill="url(#g4)"/>
<rect x="968.8" y="542.9" width="36.5" height="60.1" fill="url(#g4)"/>
<rect x="1005.9" y="542.9" width="36" height="60.1" fill="url(#g4)"/>
<rect x="1042.5" y="542.9" width="36.5" height="33.1" fill="url(#g4)"/>
<rect x="1042.5" y="576.7" width="36.5" height="26.3" fill="url(#g4)"/>
<rect x="748" y="163" width="305" height="365.7" fill="#242424"/>
<rect x="751" y="163.6" width="299" height="19.6" fill="#2f2f2f" rx="4"/>
<rect x="1010.4" y="173" width="6" height="1.1" fill="#e8e8e8"/>
<rect x="753.8" y="189.9" width="293" height="304.5" fill="#1e1f1f" rx="7"/>
<rect x="757.95" y="507.85" width="242.3" height="14.2" fill="#2e3034" rx="6" stroke="#6c7176" stroke-width="1.5"/>
<rect x="1007" y="507" width="37.3" height="15.8" fill="#1f6fb2" rx="5"/>
</svg>
<div class="t" style="left:5.3px;top:0.7px;height:15px;line-height:15px;font-size:13.2px;font-weight:bold;color:#fff;-webkit-text-stroke:0.45px #fff;transform-origin:0 50%;transform:scaleX(1.33);letter-spacing:-0.3px">UNI-T</div>
<div class="t" style="top:0.3px;height:14px;line-height:14px;font-size:8.7px;color:#08dc38;font-weight:bold;white-space:pre;left:-17.6px;width:200px;text-align:center;">Triged</div>
<div class="t" style="top:0.3px;height:14px;line-height:14px;font-size:8.7px;color:#f0f0f0;font-weight:bold;white-space:pre;left:29.5px;width:200px;text-align:center;">Single</div>
<div class="t" style="top:0.3px;height:14px;line-height:14px;font-size:8.8px;color:#f0f0f0;font-weight:bold;white-space:pre;left:77.3px;width:200px;text-align:center;">Autoset</div>
<div class="t" style="top:0.4px;height:14px;line-height:14px;font-size:11px;color:#fff;font-weight:bold;white-space:pre;left:111.6px;width:200px;text-align:center;">H</div>
<div class="t" style="top:0.4px;height:14px;line-height:14px;font-size:11px;color:#fff;font-weight:bold;white-space:pre;left:259.9px;width:200px;text-align:center;">A</div>
<div class="t" style="top:0.4px;height:14px;line-height:14px;font-size:11px;color:#fff;font-weight:bold;white-space:pre;left:493.4px;width:200px;text-align:center;">T</div>
<div class="t" style="top:0.4px;height:14px;line-height:14px;font-size:8.85px;color:#c0c4d0;font-weight:normal;white-space:pre;left:253.8px;">500 µs/div</div>
<div class="t" style="top:0.4px;height:14px;line-height:14px;font-size:8.85px;color:#c0c4d0;font-weight:normal;white-space:pre;left:303.2px;">0 s</div>
<div class="t" style="top:0.4px;height:14px;line-height:14px;font-size:9px;color:#e0e0e4;font-weight:normal;white-space:pre;left:429px;">正常,</div>
<div class="t" style="top:0.4px;height:14px;line-height:14px;font-size:9px;color:#e0e0e4;font-weight:normal;white-space:pre;left:455px;">1MPts,</div>
<div class="t" style="top:0.4px;height:14px;line-height:14px;font-size:9px;color:#e0e0e4;font-weight:normal;white-space:pre;left:486.7px;">200.00MSa/s</div>
<div class="t" style="top:0.4px;height:14px;line-height:14px;font-size:9.2px;color:#e0e0e4;font-weight:normal;white-space:pre;left:647.8px;">边沿</div>
<div class="t" style="top:0.4px;height:14px;line-height:14px;font-size:8.6px;color:#0e9c0e;font-weight:normal;white-space:pre;left:673.6px;">C3</div>
<div class="t" style="top:0.4px;height:14px;line-height:14px;font-size:9px;color:#c0c4d0;font-weight:normal;white-space:pre;left:712.5px;">33 mV</div>
<div class="t" style="top:1.3px;height:14px;line-height:14px;font-size:8.9px;color:#ececec;font-weight:normal;white-space:pre;left:764.8px;width:200px;text-align:center;-webkit-text-stroke:0.25px #ececec;">Acq</div>
<div class="t" style="top:-4px;height:14px;line-height:14px;font-size:4.2px;color:#1aa0dc;font-weight:bold;white-space:pre;left:768.2px;width:200px;text-align:center;">Ultra</div>
<div class="t" style="top:21.5px;height:14px;line-height:14px;font-size:9.1px;color:#d4d4d4;font-weight:normal;white-space:pre;left:5.1px;">主窗口</div>
<div class="t" style="top:545.3px;height:14px;line-height:14px;font-size:9.1px;color:#f0f0f0;font-weight:normal;white-space:pre;left:2px;">C1</div>
<div class="t" style="top:545.3px;height:14px;line-height:14px;font-size:9.6px;color:#f0f0f0;font-weight:normal;white-space:pre;right:1014.2px;text-align:right;">DC1M</div>
<div class="t" style="top:560.7px;height:14px;line-height:14px;font-size:9.5px;color:#9da1b0;font-weight:normal;white-space:pre;right:1014.2px;text-align:right;">100 mV/div</div>
<div class="t" style="top:575.7px;height:14px;line-height:14px;font-size:9.5px;color:#9da1b0;font-weight:normal;white-space:pre;right:1014.2px;text-align:right;">500MHz</div>
<div class="t" style="top:590.2px;height:14px;line-height:14px;font-size:9.5px;color:#9da1b0;font-weight:normal;white-space:pre;right:1014.2px;text-align:right;">1X</div>
<div class="t" style="top:545.3px;height:14px;line-height:14px;font-size:9.1px;color:#f0f0f0;font-weight:normal;white-space:pre;left:72.5px;">C2</div>
<div class="t" style="top:545.3px;height:14px;line-height:14px;font-size:9.6px;color:#f0f0f0;font-weight:normal;white-space:pre;right:943.7px;text-align:right;">DC1M</div>
<div class="t" style="top:560.7px;height:14px;line-height:14px;font-size:9.5px;color:#9da1b0;font-weight:normal;white-space:pre;right:943.7px;text-align:right;">100 mV/div</div>
<div class="t" style="top:575.7px;height:14px;line-height:14px;font-size:9.5px;color:#9da1b0;font-weight:normal;white-space:pre;right:943.7px;text-align:right;">500MHz</div>
<div class="t" style="top:590.2px;height:14px;line-height:14px;font-size:9.5px;color:#9da1b0;font-weight:normal;white-space:pre;right:943.7px;text-align:right;">1X</div>
<div class="t" style="top:545.3px;height:14px;line-height:14px;font-size:9.1px;color:#034a03;font-weight:normal;white-space:pre;left:143px;-webkit-text-stroke:0.2px #034a03;">C3</div>
<div class="t" style="top:545.3px;height:14px;line-height:14px;font-size:9.6px;color:#b4ecb4;font-weight:normal;white-space:pre;right:873.8px;text-align:right;">DC1M</div>
<div class="t" style="top:560.6px;height:14px;line-height:14px;font-size:9.4px;color:#b4b8c6;font-weight:normal;white-space:pre;right:873.8px;text-align:right;">20.0 mV/div</div>
<div class="t" style="top:573.6px;height:14px;line-height:14px;font-size:9.4px;color:#b4b8c6;font-weight:normal;white-space:pre;right:873.8px;text-align:right;">500MHz</div>
<div class="t" style="top:587.2px;height:14px;line-height:14px;font-size:9.4px;color:#b4b8c6;font-weight:normal;white-space:pre;right:873.8px;text-align:right;">1X</div>
<div class="t" style="top:545.3px;height:14px;line-height:14px;font-size:9.1px;color:#f0f0f0;font-weight:normal;white-space:pre;left:213px;">C4</div>
<div class="t" style="top:545.3px;height:14px;line-height:14px;font-size:9.6px;color:#f0f0f0;font-weight:normal;white-space:pre;right:803.7px;text-align:right;">DC1M</div>
<div class="t" style="top:560.7px;height:14px;line-height:14px;font-size:9.5px;color:#9da1b0;font-weight:normal;white-space:pre;right:803.7px;text-align:right;">100 mV/div</div>
<div class="t" style="top:575.7px;height:14px;line-height:14px;font-size:9.5px;color:#9da1b0;font-weight:normal;white-space:pre;right:803.7px;text-align:right;">500MHz</div>
<div class="t" style="top:590.2px;height:14px;line-height:14px;font-size:9.5px;color:#9da1b0;font-weight:normal;white-space:pre;right:803.7px;text-align:right;">1X</div>
<div class="t" style="top:545.3px;height:14px;line-height:14px;font-size:9px;color:#141414;font-weight:normal;white-space:pre;left:284px;-webkit-text-stroke:0.3px #141414;">G1</div>
<div class="t" style="top:545.3px;height:14px;line-height:14px;font-size:9.4px;color:#d0d0d0;font-weight:normal;white-space:pre;right:687px;text-align:right;">正弦波</div>
<div class="t" style="top:560.7px;height:14px;line-height:14px;font-size:9.4px;color:#d8d8d8;font-weight:normal;white-space:pre;left:284.4px;">频率</div>
<div class="t" style="top:560.7px;height:14px;line-height:14px;font-size:9.4px;color:#f0f0f0;font-weight:normal;white-space:pre;right:687px;text-align:right;">1.00 kHz</div>
<div class="t" style="top:575.4px;height:14px;line-height:14px;font-size:9.4px;color:#d8d8d8;font-weight:normal;white-space:pre;left:284.4px;">幅度</div>
<div class="t" style="top:575.4px;height:14px;line-height:14px;font-size:9.4px;color:#f0f0f0;font-weight:normal;white-space:pre;right:684.6px;text-align:right;">50.0 mVpp</div>
<div class="t" style="top:589.7px;height:14px;line-height:14px;font-size:9.4px;color:#d8d8d8;font-weight:normal;white-space:pre;left:284.4px;">偏置</div>
<div class="t" style="top:589.7px;height:14px;line-height:14px;font-size:9.4px;color:#f0f0f0;font-weight:normal;white-space:pre;right:687px;text-align:right;">0  V</div>
<div class="t" style="top:567.6px;height:14px;line-height:14px;font-size:9.2px;color:#e6e6e6;font-weight:normal;white-space:pre;left:808.7px;width:200px;text-align:center;">数学+</div>
<div class="t" style="top:567.6px;height:14px;line-height:14px;font-size:9.2px;color:#e6e6e6;font-weight:normal;white-space:pre;left:848.3px;width:200px;text-align:center;">参考+</div>
<div class="t" style="top:567.6px;height:14px;line-height:14px;font-size:9.2px;color:#e6e6e6;font-weight:normal;white-space:pre;left:886.95px;width:200px;text-align:center;">逻辑+</div>
<div class="t" style="top:567.6px;height:14px;line-height:14px;font-size:9.2px;color:#e6e6e6;font-weight:normal;white-space:pre;left:923.8px;width:200px;text-align:center;">总线+</div>
<div class="t" style="top:552px;height:14px;line-height:14px;font-size:9px;color:#e6e6e6;font-weight:normal;white-space:pre;left:960.4px;width:200px;text-align:center;">G1</div>
<div class="t" style="top:584.3px;height:14px;line-height:14px;font-size:9px;color:#e6e6e6;font-weight:normal;white-space:pre;left:960.4px;width:200px;text-align:center;">G2</div>
<div class="t" style="top:166.5px;height:14px;line-height:14px;font-size:8.6px;color:#f4f4f4;font-weight:bold;white-space:pre;left:758px;">小优AI助手</div>
<div class="t" style="top:166px;height:14px;line-height:14px;font-size:8.6px;color:#e8e8e8;font-weight:normal;white-space:pre;left:937.4px;width:200px;text-align:center;">x</div>
<div class="t" style="top:196.2px;height:14px;line-height:14px;font-size:8.75px;color:#f0f0f0;font-weight:normal;white-space:pre;left:762px;">欢迎使用小优AI助手!</div>
<div class="t" style="left:766.7px;top:507.6px;height:14px;line-height:14px;font-size:7.8px;color:#fff;-webkit-text-stroke:0.2px #fff;white-space:pre;font-family:'Liberation Sans','Noto Serif CJK SC',serif"><span>设置示波器垂直档位为</span><span class="l" style="margin-left:1.1px">10mV/div;</span><span class="l" style="margin-left:6.1px">n</span><span style="margin-left:2.6px">设置示波器水平档位为</span><span class="l" style="margin-left:0.3px">1ms;</span></div>
<div class="t" style="top:507.8px;height:14px;line-height:14px;font-size:9px;color:#fff;font-weight:normal;white-space:pre;left:925.6px;width:200px;text-align:center;">发送</div>
<svg style="position:absolute;left:790px;top:0px" width="20" height="18" viewBox="0 0 20 18" fill="none"><path d="M2.2 6.5 C3.5 1.5 6.5 1.5 8.6 6 C10.6 10.5 13.5 13 16.6 7.2" stroke="#d0d0d0" stroke-width="1.3"/><path d="M5.6 1 V13.5 M13.6 1 V13.5" stroke="#1aa0dc" stroke-width="1" stroke-dasharray="1.6 1"/><rect x="15" y="12.2" width="2" height="2.4" fill="#d0d0d0"/><rect x="2.3" y="0.8" width="1.6" height="1.6" fill="#d0d0d0"/></svg><svg style="position:absolute;left:822px;top:0px" width="22" height="18" viewBox="0 0 22 18" fill="none"><path d="M2 9.3 H18" stroke="#d0d0d0" stroke-width="1"/><path d="M5.5 2 V9 M9.5 3 V9 M14 3 V9" stroke="#d0d0d0" stroke-width="1.1"/><path d="M4 6.5 H16" stroke="#1aa0dc" stroke-width="2.2" stroke-dasharray="2 1.2"/><path d="M6.5 10.5 V14 M10.5 10.5 V14" stroke="#1aa0dc" stroke-width="1.4"/><path d="M11.5 0 H15.5 V2 H11.5 Z" fill="#d0d0d0"/></svg><svg style="position:absolute;left:888px;top:0px" width="20" height="18" viewBox="0 0 20 18" fill="none"><circle cx="9" cy="6.2" r="5.4" stroke="#d0d0d0" stroke-width="1.3"/><path d="M13 10.2 L16.8 13.8" stroke="#d0d0d0" stroke-width="1.4"/><path d="M6.1 6 V8.4 H8.8" stroke="#1aa0dc" stroke-width="1.1"/></svg><svg style="position:absolute;left:921px;top:0px" width="20" height="18" viewBox="0 0 20 18" fill="none"><path d="M3 1.6 H13.5 L16.6 4.6 V14.4 H3 Z" stroke="#d0d0d0" stroke-width="1.3"/><path d="M6.3 1.8 V5.6 H12.3 V1.8" stroke="#d0d0d0" stroke-width="1.1"/><rect x="6" y="9" width="7.6" height="3.6" fill="#1aa0dc"/></svg><svg style="position:absolute;left:954px;top:0px" width="20" height="18" viewBox="0 0 20 18" fill="none"><path d="M3 4.5 V1.6 H6.2 M13.8 1.6 H17 V4.5 M17 11.5 V14.4 H13.8 M6.2 14.4 H3 V11.5" stroke="#d0d0d0" stroke-width="1.3"/><rect x="5.6" y="3.8" width="8.8" height="8.2" stroke="#d0d0d0" stroke-width="1.1"/><rect x="7.2" y="5.6" width="5.6" height="3.6" fill="#1aa0dc"/></svg><svg style="position:absolute;left:986px;top:0px" width="22" height="18" viewBox="0 0 22 18" fill="none"><path d="M9 0.8 H11.2 V6.3 H9 Z" fill="#d0d0d0"/><path d="M3 6.6 H17.2 V8.6 H3 Z" fill="#d0d0d0"/><path d="M4.2 9 L5.2 13.7 H15 L16 9" stroke="#d0d0d0" stroke-width="1.2"/><rect x="6.6" y="10.1" width="7" height="2.3" fill="#1aa0dc"/></svg><svg style="position:absolute;left:1018.45px;top:0px" width="20" height="18" viewBox="0 0 20 18" fill="none"><polygon points="15.1,7.4 15.63,7.95 16.46,8.68 16.67,9.42 16.47,10.08 16.15,10.69 15.48,11.06 14.37,10.99 13.61,11.01 13.59,11.77 13.66,12.88 13.29,13.55 12.68,13.87 12.02,14.07 11.28,13.86 10.55,13.03 10,12.5 9.45,13.03 8.72,13.86 7.98,14.07 7.32,13.87 6.71,13.55 6.34,12.88 6.41,11.77 6.39,11.01 5.63,10.99 4.52,11.06 3.85,10.69 3.53,10.08 3.33,9.42 3.54,8.68 4.37,7.95 4.9,7.4 4.37,6.85 3.54,6.12 3.33,5.38 3.53,4.72 3.85,4.11 4.52,3.74 5.63,3.81 6.39,3.79 6.41,3.03 6.34,1.92 6.71,1.25 7.32,0.93 7.98,0.73 8.72,0.94 9.45,1.77 10,2.3 10.55,1.77 11.28,0.94 12.02,0.73 12.68,0.93 13.29,1.25 13.66,1.92 13.59,3.03 13.61,3.79 14.37,3.81 15.48,3.74 16.15,4.11 16.47,4.72 16.67,5.38 16.46,6.12 15.63,6.85" stroke="#d0d0d0" stroke-width="1.3" /><circle cx="10" cy="7.4" r="2.7" stroke="#1aa0dc" stroke-width="1.4"/></svg><svg style="position:absolute;left:1050px;top:0px" width="24" height="18" viewBox="0 0 24 18" fill="none"><path d="M3.2 3.2 L9.6 2.3 V7.3 H3.2 Z M3.2 8.6 H9.6 V13.6 L3.2 12.7 Z M11 8.6 H19 V15 L11 13.8 Z" stroke="#c4c4c4" stroke-width="1.1"/><path d="M11 2.1 L19 0.9 V7.3 H11 Z" stroke="#2a7fd0" stroke-width="1.1"/></svg><svg style="position:absolute;left:987.1px;top:19px" width="20" height="18" viewBox="0 0 20 18" fill="none"><rect x="2.9" y="1.5" width="12.6" height="13.2" stroke="#d0d0d0" stroke-width="1.1" stroke-dasharray="2.2 1.2"/><path d="M5.9 4.6 H12.5 M9.2 4.6 V12.4" stroke="#1aa0dc" stroke-width="1.4"/></svg><svg style="position:absolute;left:1020px;top:19px" width="20" height="18" viewBox="0 0 20 18" fill="none"><circle cx="9.3" cy="7.6" r="5.9" stroke="#d0d0d0" stroke-width="1.3"/><path d="M13.6 12 L17.6 15.8" stroke="#d0d0d0" stroke-width="1.5"/><path d="M6.2 7.6 H12.4 M9.3 4.5 V10.7" stroke="#1aa0dc" stroke-width="1.5"/></svg><svg style="position:absolute;left:1055.5px;top:19px" width="20" height="18" viewBox="0 0 20 18" fill="none"><polygon points="15.1,9.3 15.63,9.85 16.46,10.58 16.67,11.32 16.47,11.98 16.15,12.59 15.48,12.96 14.37,12.89 13.61,12.91 13.59,13.67 13.66,14.78 13.29,15.45 12.68,15.77 12.02,15.97 11.28,15.76 10.55,14.93 10,14.4 9.45,14.93 8.72,15.76 7.98,15.97 7.32,15.77 6.71,15.45 6.34,14.78 6.41,13.67 6.39,12.91 5.63,12.89 4.52,12.96 3.85,12.59 3.53,11.98 3.33,11.32 3.54,10.58 4.37,9.85 4.9,9.3 4.37,8.75 3.54,8.02 3.33,7.28 3.53,6.62 3.85,6.01 4.52,5.64 5.63,5.71 6.39,5.69 6.41,4.93 6.34,3.82 6.71,3.15 7.32,2.83 7.98,2.63 8.72,2.84 9.45,3.67 10,4.2 10.55,3.67 11.28,2.84 12.02,2.63 12.68,2.83 13.29,3.15 13.66,3.82 13.59,4.93 13.61,5.69 14.37,5.71 15.48,5.64 16.15,6.01 16.47,6.62 16.67,7.28 16.46,8.02 15.63,8.75" stroke="#d0d0d0" stroke-width="1.3" stroke-dasharray="5 0.9"/><path d="M11.8 7.6 A2.7 2.7 0 1 0 12.6 10.4" stroke="#1aa0dc" stroke-width="1.2"/></svg><svg style="position:absolute;left:408px;top:0px" width="20" height="18" viewBox="0 0 20 18" fill="none"><path d="M1.2 13.2 H2.4 C5 13.2 4.6 0.8 7 0.8 H10.6 C13 0.8 12.6 13.2 15.2 13.2 H17.4" stroke="#d0d0d0" stroke-width="1.2"/></svg><svg style="position:absolute;left:688px;top:0px" width="18" height="18" viewBox="0 0 18 18" fill="none"><path d="M2.6 14.6 C7.6 14.6 7 0.6 12.6 0.6" stroke="#d0d0d0" stroke-width="1.1"/><path d="M9.2 4.6 L6.3 8.6 H8.3 V10.6 H10.1 V8.6 H12.1 Z" fill="#1aa0dc"/></svg><svg style="position:absolute;left:1.6px;top:520.3px" width="18.4" height="18.4" viewBox="0 0 20 20" fill="none"><g stroke="#d0d0d0" stroke-width="1.2"><rect x="7.6" y="-0.6" width="4.8" height="21" rx="2.2" transform="rotate(45 10 10)"/><rect x="7.6" y="-0.6" width="4.8" height="21" rx="2.2" transform="rotate(-45 10 10)" fill="#232429"/></g><path d="M5.3 4.2 L6.6 5.5 M13.6 13.2 L15 14.6" stroke="#1aa0dc" stroke-width="1.6"/></svg>
</div>
</body>
</html>
